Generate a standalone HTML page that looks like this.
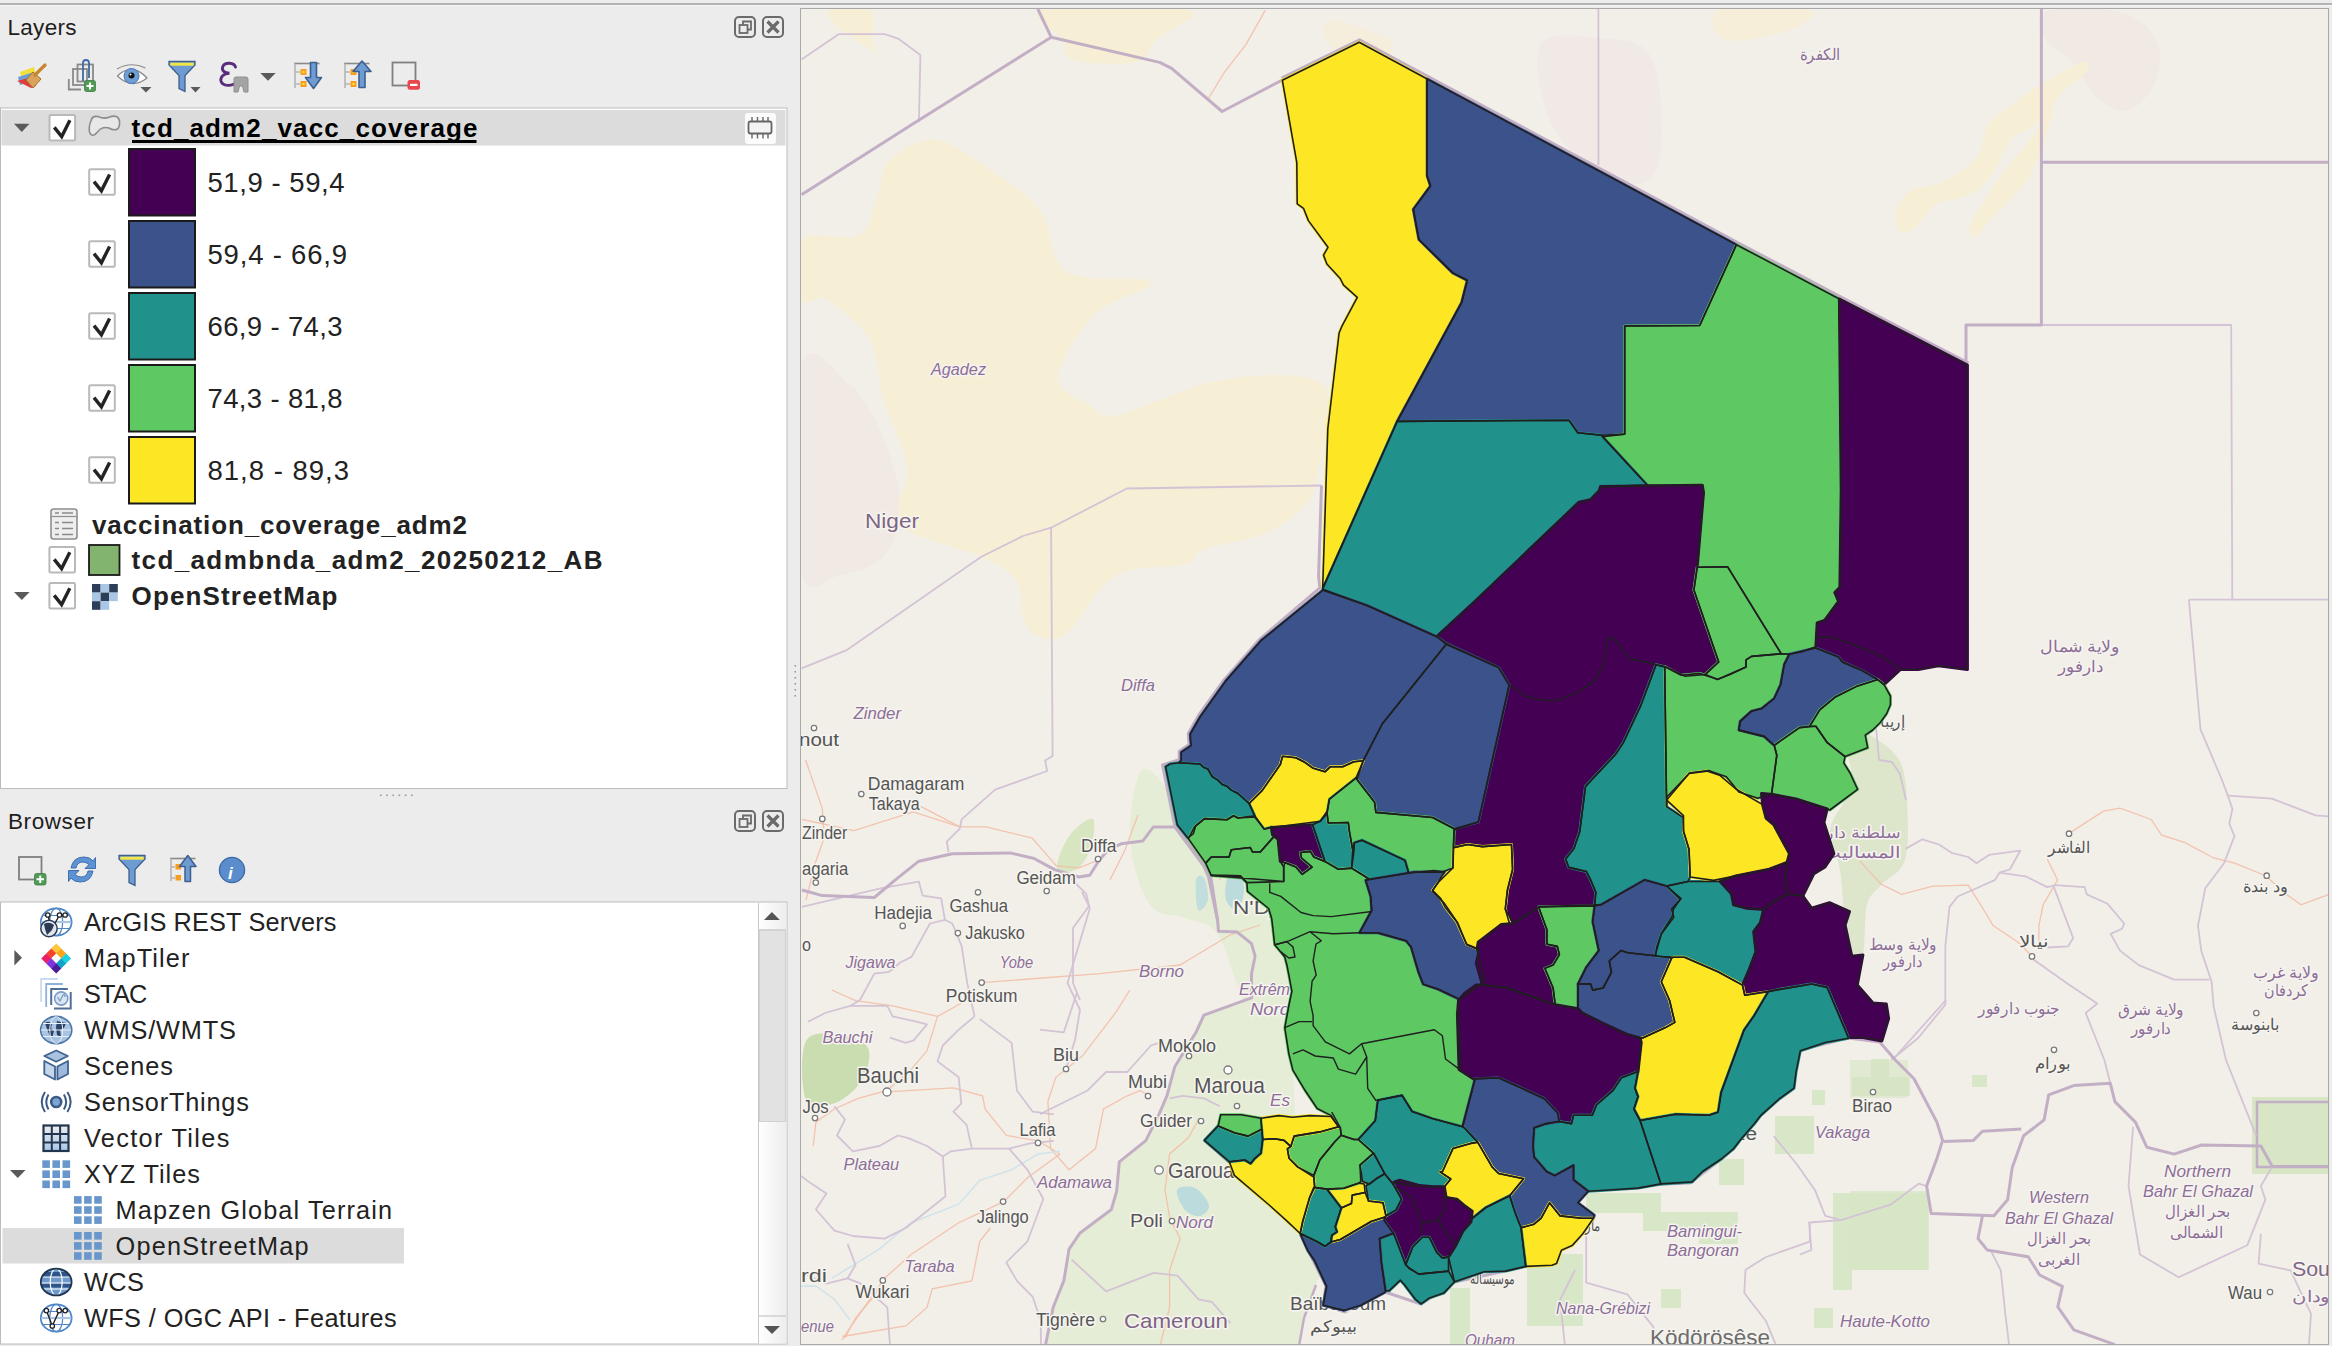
<!DOCTYPE html><html><head><meta charset="utf-8"><style>html,body{margin:0;padding:0;background:#ececec;overflow:hidden}svg{display:block}text{font-family:"Liberation Sans",sans-serif}</style></head><body>
<svg width="2332" height="1346" viewBox="0 0 2332 1346">
<rect x="0" y="0" width="2332" height="1346" fill="#ececec"/>
<rect x="0" y="3" width="2332" height="2" fill="#b2b2b2"/>
<rect x="0" y="5" width="2332" height="1" fill="#f6f6f6"/>
<clipPath id="mc"><rect x="801" y="9" width="1527" height="1335"/></clipPath>
<rect x="800.5" y="8.5" width="1528" height="1336" fill="#f2efe9" stroke="#a9a9a9" stroke-width="1"/>
<g clip-path="url(#mc)">
<path d="M801.0,365.0 C809.2,334.2 836.8,374.2 850.0,385.0 C863.2,395.8 871.7,410.8 880.0,430.0 C888.3,449.2 899.2,479.2 900.0,500.0 C900.8,520.8 895.0,542.5 885.0,555.0 C875.0,567.5 854.0,572.5 840.0,575.0 C826.0,577.5 807.5,605.0 801.0,570.0 C794.5,535.0 792.8,395.8 801.0,365.0Z" fill="#efe7e2" opacity="0.65"/>
<path d="M2045.0,12.0 C2057.3,7.3 2101.5,7.3 2120.0,12.0 C2138.5,16.7 2150.0,28.7 2156.0,40.0 C2162.0,51.3 2160.3,68.3 2156.0,80.0 C2151.7,91.7 2139.3,106.7 2130.0,110.0 C2120.7,113.3 2110.0,108.3 2100.0,100.0 C2090.0,91.7 2079.0,70.0 2070.0,60.0 C2061.0,50.0 2050.2,48.0 2046.0,40.0 C2041.8,32.0 2032.7,16.7 2045.0,12.0Z" fill="#efe7e2" opacity="0.8"/>
<path d="M1540.0,45.0 C1548.0,30.5 1581.7,36.3 1600.0,38.0 C1618.3,39.7 1639.7,38.0 1650.0,55.0 C1660.3,72.0 1662.8,118.8 1662.0,140.0 C1661.2,161.2 1655.3,176.7 1645.0,182.0 C1634.7,187.3 1615.5,181.5 1600.0,172.0 C1584.5,162.5 1562.0,146.2 1552.0,125.0 C1542.0,103.8 1532.0,59.5 1540.0,45.0Z" fill="#efe7e2" opacity="0.7"/>
<path d="M936.0,140.0 C952.7,141.7 972.7,158.3 990.0,170.0 C1007.3,181.7 1027.2,193.0 1040.0,210.0 C1052.8,227.0 1048.7,260.0 1067.0,272.0 C1085.3,284.0 1145.5,274.8 1150.0,282.0 C1154.5,289.2 1109.3,299.0 1094.0,315.0 C1078.7,331.0 1058.7,363.0 1058.0,378.0 C1057.3,393.0 1080.0,398.8 1090.0,405.0 C1100.0,411.2 1096.0,419.2 1118.0,415.0 C1140.0,410.8 1187.8,385.0 1222.0,380.0 C1256.2,375.0 1307.0,370.0 1323.0,385.0 C1339.0,400.0 1321.0,450.0 1318.0,470.0 C1315.0,490.0 1314.0,494.3 1305.0,505.0 C1296.0,515.7 1280.8,526.7 1264.0,534.0 C1247.2,541.3 1217.0,544.0 1204.0,549.0 C1191.0,554.0 1200.8,559.5 1186.0,564.0 C1171.2,568.5 1134.8,564.5 1115.0,576.0 C1095.2,587.5 1079.8,623.0 1067.0,633.0 C1054.2,643.0 1045.3,638.5 1038.0,636.0 C1030.7,633.5 1026.5,627.0 1023.0,618.0 C1019.5,609.0 1023.5,592.0 1017.0,582.0 C1010.5,572.0 1001.8,566.3 984.0,558.0 C966.2,549.7 924.3,540.3 910.0,532.0 C895.7,523.7 898.5,519.0 898.0,508.0 C897.5,497.0 909.5,484.3 907.0,466.0 C904.5,447.7 889.2,419.0 883.0,398.0 C876.8,377.0 879.3,356.3 870.0,340.0 C860.7,323.7 838.5,306.7 827.0,300.0 C815.5,293.3 805.3,310.0 801.0,300.0 C796.7,290.0 791.2,250.8 801.0,240.0 C810.8,229.2 847.2,242.8 860.0,235.0 C872.8,227.2 873.0,205.5 878.0,193.0 C883.0,180.5 880.3,168.8 890.0,160.0 C899.7,151.2 919.3,138.3 936.0,140.0Z" fill="#f6eed5"/>
<path d="M1044.0,10.0 C1065.2,5.2 1170.2,5.2 1189.0,10.0 C1207.8,14.8 1165.8,30.3 1157.0,39.0 C1148.2,47.7 1150.0,58.5 1136.0,62.0 C1122.0,65.5 1085.3,63.8 1073.0,60.0 C1060.7,56.2 1066.8,47.3 1062.0,39.0 C1057.2,30.7 1022.8,14.8 1044.0,10.0Z" fill="#f6eed5"/>
<path d="M830.0,10.0 C835.2,7.0 862.8,4.2 870.0,10.0 C877.2,15.8 871.3,37.5 873.0,45.0 C874.7,52.5 885.7,57.8 880.0,55.0 C874.3,52.2 847.3,35.5 839.0,28.0 C830.7,20.5 824.8,13.0 830.0,10.0Z" fill="#f6eed5"/>
<path d="M2083.0,62.0 C2090.7,59.8 2089.5,67.0 2086.0,72.0 C2082.5,77.0 2068.3,84.8 2062.0,92.0 C2055.7,99.2 2053.3,109.0 2048.0,115.0 C2042.7,121.0 2036.3,123.8 2030.0,128.0 C2023.7,132.2 2015.8,133.0 2010.0,140.0 C2004.2,147.0 2000.3,161.7 1995.0,170.0 C1989.7,178.3 1983.8,185.3 1978.0,190.0 C1972.2,194.7 1967.2,195.5 1960.0,198.0 C1952.8,200.5 1942.5,200.0 1935.0,205.0 C1927.5,210.0 1920.8,223.5 1915.0,228.0 C1909.2,232.5 1903.2,235.0 1900.0,232.0 C1896.8,229.0 1894.0,217.0 1896.0,210.0 C1898.0,203.0 1904.7,194.5 1912.0,190.0 C1919.3,185.5 1929.5,188.0 1940.0,183.0 C1950.5,178.0 1967.0,169.7 1975.0,160.0 C1983.0,150.3 1982.2,134.0 1988.0,125.0 C1993.8,116.0 2001.3,112.7 2010.0,106.0 C2018.7,99.3 2027.8,92.3 2040.0,85.0 C2052.2,77.7 2075.3,64.2 2083.0,62.0Z" fill="#f6eed5"/>
<path d="M2052.0,108.0 C2054.5,108.0 2048.7,128.8 2045.0,140.0 C2041.3,151.2 2035.8,165.0 2030.0,175.0 C2024.2,185.0 2016.7,192.5 2010.0,200.0 C2003.3,207.5 1995.8,213.8 1990.0,220.0 C1984.2,226.2 1978.3,236.2 1975.0,237.0 C1971.7,237.8 1968.3,231.2 1970.0,225.0 C1971.7,218.8 1979.2,209.2 1985.0,200.0 C1990.8,190.8 1997.5,180.0 2005.0,170.0 C2012.5,160.0 2022.2,150.3 2030.0,140.0 C2037.8,129.7 2049.5,108.0 2052.0,108.0Z" fill="#f6eed5"/>
<path d="M1720.0,10.0 C1734.2,5.0 1798.3,6.7 1810.0,10.0 C1821.7,13.3 1804.2,25.0 1790.0,30.0 C1775.8,35.0 1736.7,43.3 1725.0,40.0 C1713.3,36.7 1705.8,15.0 1720.0,10.0Z" fill="#f6eed5" opacity="0.8"/>
<path d="M1330.0,20.0 C1340.0,19.2 1381.7,33.3 1390.0,40.0 C1398.3,46.7 1390.0,59.2 1380.0,60.0 C1370.0,60.8 1338.3,51.7 1330.0,45.0 C1321.7,38.3 1320.0,20.8 1330.0,20.0Z" fill="#f6eed5" opacity="0.7"/>
<path d="M1142.0,770.0 C1149.5,763.3 1163.7,785.0 1175.0,800.0 C1186.3,815.0 1198.2,847.5 1210.0,860.0 C1221.8,872.5 1233.5,861.7 1246.0,875.0 C1258.5,888.3 1276.8,917.5 1285.0,940.0 C1293.2,962.5 1300.8,998.3 1295.0,1010.0 C1289.2,1021.7 1262.8,1022.5 1250.0,1010.0 C1237.2,997.5 1228.8,950.3 1218.0,935.0 C1207.2,919.7 1196.3,923.0 1185.0,918.0 C1173.7,913.0 1159.2,918.0 1150.0,905.0 C1140.8,892.0 1131.3,862.5 1130.0,840.0 C1128.7,817.5 1134.5,776.7 1142.0,770.0Z" fill="#e6edd6"/>
<path d="M1057.0,867.0 C1056.2,861.2 1064.0,843.0 1070.0,835.0 C1076.0,827.0 1089.7,816.5 1093.0,819.0 C1096.3,821.5 1093.0,841.5 1090.0,850.0 C1087.0,858.5 1080.5,867.2 1075.0,870.0 C1069.5,872.8 1057.8,872.8 1057.0,867.0Z" fill="#d7e6c0"/>
<path d="M1251.5,997.9 L1203.9,1015.1 L1196.0,1032.3 L1174.8,1066.7 L1166.9,1095.8 L1159.0,1114.3 L1145.8,1140.7 L1119.3,1161.9 L1116.7,1191.0 L1111.4,1209.5 L1079.7,1233.3 L1069.1,1249.1 L1063.8,1280.9 L1053.2,1307.3 L1045.3,1346.0 L1299.0,1346.0 L1304.0,1318.0 L1316.0,1285.0 L1330.0,1250.0 L1300.0,1230.0 L1290.0,1000.0 L1290.0,955.0Z" fill="#e6edd6"/>
<path d="M1316.0,1285.0 L1304.0,1318.0 L1299.0,1346.0" fill="none" stroke="#c3afc5" stroke-width="2.5"/>
<path d="M1842.0,727.0 C1845.0,720.3 1860.5,729.5 1870.0,735.0 C1879.5,740.5 1892.8,749.2 1899.0,760.0 C1905.2,770.8 1906.0,783.3 1907.0,800.0 C1908.0,816.7 1909.3,845.8 1905.0,860.0 C1900.7,874.2 1887.3,877.5 1881.0,885.0 C1874.7,892.5 1870.0,893.5 1867.0,905.0 C1864.0,916.5 1865.7,945.5 1863.0,954.0 C1860.3,962.5 1854.0,960.8 1851.0,956.0 C1848.0,951.2 1846.8,939.3 1845.0,925.0 C1843.2,910.7 1842.5,885.8 1840.0,870.0 C1837.5,854.2 1829.2,841.7 1830.0,830.0 C1830.8,818.3 1841.3,809.2 1845.0,800.0 C1848.7,790.8 1852.5,787.2 1852.0,775.0 C1851.5,762.8 1839.0,733.7 1842.0,727.0Z" fill="#dde6cb"/>
<path d="M806.0,1041.0 C811.7,1030.2 829.7,1033.8 840.0,1035.0 C850.3,1036.2 864.3,1040.5 868.0,1048.0 C871.7,1055.5 867.5,1070.8 862.0,1080.0 C856.5,1089.2 844.3,1099.7 835.0,1103.0 C825.7,1106.3 810.8,1110.3 806.0,1100.0 C801.2,1089.7 800.3,1051.8 806.0,1041.0Z" fill="#c9ddb0"/>
<rect x="1586" y="1193" width="75" height="20" fill="#d5e5c3" opacity="0.85"/>
<rect x="1643" y="1212" width="95" height="19" fill="#d5e5c3" opacity="0.85"/>
<rect x="1699" y="1231" width="39" height="13" fill="#d5e5c3" opacity="0.85"/>
<rect x="1719" y="1159" width="25" height="26" fill="#d5e5c3" opacity="0.85"/>
<rect x="1852" y="1077" width="58" height="19" fill="#d5e5c3" opacity="0.85"/>
<rect x="1871" y="1059" width="18" height="18" fill="#d5e5c3" opacity="0.85"/>
<rect x="1812" y="1090" width="13" height="15" fill="#d5e5c3" opacity="0.85"/>
<rect x="1775" y="1116" width="39" height="38" fill="#d5e5c3" opacity="0.85"/>
<rect x="1972" y="1075" width="15" height="12" fill="#d5e5c3" opacity="0.85"/>
<rect x="1833" y="1193" width="95" height="77" fill="#d5e5c3" opacity="0.85"/>
<rect x="1833" y="1270" width="19" height="20" fill="#d5e5c3" opacity="0.85"/>
<rect x="1661" y="1289" width="20" height="19" fill="#d5e5c3" opacity="0.85"/>
<rect x="1814" y="1308" width="19" height="20" fill="#d5e5c3" opacity="0.85"/>
<rect x="1450" y="1288" width="20" height="56" fill="#d5e5c3" opacity="0.85"/>
<rect x="1527" y="1254" width="56" height="72" fill="#d5e5c3" opacity="0.85"/>
<rect x="2252" y="1097" width="80" height="77" fill="#d8e6c6"/>
<rect x="2257" y="1102" width="75" height="65" fill="none" stroke="#c3afc5" stroke-width="2.5"/>
<rect x="1850" y="1191" width="79" height="79" fill="#d5e5c3" opacity="0.7"/>
<rect x="1850" y="1060" width="58" height="38" fill="#d5e5c3" opacity="0.6"/>
<path d="M1228.0,876.0 C1230.3,871.7 1237.3,871.7 1240.0,874.0 C1242.7,876.3 1244.3,884.0 1244.0,890.0 C1243.7,896.0 1241.0,908.3 1238.0,910.0 C1235.0,911.7 1227.7,905.7 1226.0,900.0 C1224.3,894.3 1225.7,880.3 1228.0,876.0Z" fill="#aad3df" opacity="0.7"/>
<path d="M1196.0,880.0 C1197.0,874.7 1202.0,874.7 1204.0,878.0 C1206.0,881.3 1209.0,894.7 1208.0,900.0 C1207.0,905.3 1200.0,913.3 1198.0,910.0 C1196.0,906.7 1195.0,885.3 1196.0,880.0Z" fill="#aad3df" opacity="0.6"/>
<path d="M1177.0,1190.0 C1178.7,1186.3 1189.7,1185.5 1195.0,1188.0 C1200.3,1190.5 1208.2,1200.3 1209.0,1205.0 C1209.8,1209.7 1204.0,1215.2 1200.0,1216.0 C1196.0,1216.8 1188.8,1214.3 1185.0,1210.0 C1181.2,1205.7 1175.3,1193.7 1177.0,1190.0Z" fill="#aad3df" opacity="0.7"/>
<path d="M801.9,819.4 L853.9,830.6 L913.3,812.0 L959.8,826.9 L985.8,826.9 L1032.2,838.0 L1056.4,865.9 L1078.7,867.8 L1099.0,860.0" fill="none" stroke="#f3bea6" stroke-width="1.3" opacity="0.9"/>
<path d="M805.6,760.0 L822.3,808.3 L824.2,838.0 L814.9,864.0 L806.0,900.0" fill="none" stroke="#f3bea6" stroke-width="1.3" opacity="0.9"/>
<path d="M920.7,806.4 L959.8,826.9" fill="none" stroke="#f3bea6" stroke-width="1.3" opacity="0.9"/>
<path d="M978.3,982.9 L1100.0,973.6 L1180.0,965.0 L1230.0,935.0 L1260.0,925.0" fill="none" stroke="#f3bea6" stroke-width="1.3" opacity="0.9"/>
<path d="M1255.0,810.0 L1235.0,840.0 L1220.0,880.0" fill="none" stroke="#f3bea6" stroke-width="1.3" opacity="0.9"/>
<path d="M1138.0,815.0 L1125.0,850.0 L1110.0,880.0" fill="none" stroke="#f3bea6" stroke-width="1.3" opacity="0.9"/>
<path d="M2068.0,834.1 L2103.4,811.2 L2120.0,808.1 L2151.2,819.5 L2161.6,835.1 L2184.5,842.4 L2213.7,858.0 L2234.5,863.2 L2265.7,875.7 L2286.5,894.4 L2301.0,904.8 L2329.0,894.4" fill="none" stroke="#f3bea6" stroke-width="1.3" opacity="0.9"/>
<path d="M1860.0,861.1 L1880.8,884.0 L1901.6,894.4 L1932.8,886.1 L1968.2,885.1 L1980.7,904.8 L1993.1,925.6 L2018.1,942.3 L2030.6,954.7" fill="none" stroke="#f3bea6" stroke-width="1.3" opacity="0.9"/>
<path d="M2047.2,859.0 L2057.6,879.9 L2043.1,904.8 L2038.9,925.6 L2038.9,950.6" fill="none" stroke="#f3bea6" stroke-width="1.3" opacity="0.9"/>
<path d="M961.3,1003.2 L937.5,1016.4 L927.0,1050.8 L911.1,1069.3 L887.3,1090.5 L858.2,1098.4 L834.4,1109.0 L815.9,1122.2 L813.2,1146.0" fill="none" stroke="#f3bea6" stroke-width="1.3" opacity="0.9"/>
<path d="M887.3,1091.8 L953.4,1087.9 L982.5,1095.8 L985.1,1109.0 L1006.3,1135.5 L1038.0,1140.8 L1060.0,1154.0" fill="none" stroke="#f3bea6" stroke-width="1.3" opacity="0.9"/>
<path d="M831.7,990.0 L855.5,1000.6 L892.6,1005.9 L937.5,1016.4" fill="none" stroke="#f3bea6" stroke-width="1.3" opacity="0.9"/>
<path d="M1060.0,1154.0 L1027.5,1177.8 L1003.7,1201.6 L958.7,1222.7 L911.1,1254.5 L884.6,1278.3 L847.6,1331.2 L842.0,1340.0" fill="none" stroke="#f3bea6" stroke-width="1.3" opacity="0.9"/>
<path d="M990.4,1228.0 L979.8,1241.3 L971.9,1280.9 L932.2,1288.9 L927.0,1307.4 L905.8,1325.9 L842.3,1336.5" fill="none" stroke="#f3bea6" stroke-width="1.3" opacity="0.9"/>
<path d="M884.6,1283.6 L871.4,1299.4 L855.5,1318.0 L845.0,1338.0" fill="none" stroke="#f3bea6" stroke-width="1.3" opacity="0.9"/>
<path d="M1129.9,990.0 L1116.7,1011.2 L1082.3,1056.1 L1055.9,1077.3 L1047.9,1101.1 L1050.6,1148.6 L1069.1,1169.8 L1095.5,1148.6 L1103.5,1109.0 L1127.3,1095.8 L1140.5,1090.5 L1148.4,1095.8" fill="none" stroke="#f3bea6" stroke-width="1.3" opacity="0.9"/>
<path d="M1198.6,1119.6 L1188.1,1138.1 L1169.6,1153.9 L1165.0,1190.0 L1169.6,1217.4 L1180.1,1238.5 L1169.6,1270.3 L1169.6,1307.3 L1160.0,1346.0" fill="none" stroke="#f3bea6" stroke-width="1.3" opacity="0.9"/>
<path d="M1265.2,10.4 L1245.9,44.6 L1225.0,71.3 L1208.7,98.0" fill="none" stroke="#f3bea6" stroke-width="1.3" opacity="0.9"/>
<path d="M831.7,1278.3 L879.3,1249.2 L911.1,1222.7 L958.7,1204.2 L979.8,1180.4 L1011.6,1169.8 L1038.0,1154.0 L1060.0,1151.3" fill="none" stroke="#cfe3ea" stroke-width="1.5"/>
<path d="M800.0,1286.2 L816.0,1286.0 L834.4,1299.4 L850.0,1320.0" fill="none" stroke="#cfe3ea" stroke-width="1.5"/>
<path d="M801.5,59.5 L838.6,34.2 L884.7,34.2 L898.1,38.6 L920.4,55.0 L918.9,121.9" fill="none" stroke="#d3c3d5" stroke-width="1.8" stroke-linejoin="round"/>
<path d="M801.5,668.3 L846.1,650.4 L981.3,556.8 L1022.9,536.0 L1051.1,527.7 L1126.9,488.5 L1321.5,485.5" fill="none" stroke="#d3c3d5" stroke-width="1.8" stroke-linejoin="round"/>
<path d="M1051.1,527.7 L1052.6,755.9 L1045.2,760.4 L1047.1,771.0 L995.1,789.7 L961.6,819.4 L959.8,828.7 L946.8,841.7 L948.6,852.0" fill="none" stroke="#d3c3d5" stroke-width="1.8" stroke-linejoin="round"/>
<path d="M1598.4,9.0 L1598.4,165.0" fill="none" stroke="#d3c3d5" stroke-width="1.8" stroke-linejoin="round"/>
<path d="M1966.0,325.0 L2231.2,325.0 L2232.3,600.6" fill="none" stroke="#d3c3d5" stroke-width="1.8" stroke-linejoin="round"/>
<path d="M2188.9,599.7 L2329.0,599.7" fill="none" stroke="#d3c3d5" stroke-width="1.8" stroke-linejoin="round"/>
<path d="M1893.3,1059.0 L1946.0,1000.0" fill="none" stroke="#d3c3d5" stroke-width="1.8" stroke-linejoin="round"/>
<path d="M1809.8,1223.6 L1809.8,1241.6 L1766.1,1257.0 L1745.5,1269.8 L1744.3,1293.0 L1766.1,1321.3 L1776.4,1346.0" fill="none" stroke="#d3c3d5" stroke-width="1.8" stroke-linejoin="round"/>
<path d="M1586.2,1231.3 L1586.2,1282.7 L1627.3,1294.3 L1653.0,1326.4 L1660.0,1346.0" fill="none" stroke="#d3c3d5" stroke-width="1.8" stroke-linejoin="round"/>
<path d="M1565.0,1346.0 L1560.0,1300.0 L1575.0,1270.0" fill="none" stroke="#d3c3d5" stroke-width="1.8" stroke-linejoin="round"/>
<path d="M801.9,906.8 L881.7,888.2 L918.9,881.7 L922.6,895.6 L941.2,898.4 L944.9,919.8 L952.3,923.5 L961.6,945.8 L967.2,982.9 L974.6,1016.4" fill="none" stroke="#d3c3d5" stroke-width="1.8" stroke-linejoin="round"/>
<path d="M944.9,919.8 L930.0,923.5 L911.5,956.9 L900.3,962.5 L889.2,971.8 L874.3,973.6 L860.0,1000.0 L850.3,1005.9" fill="none" stroke="#d3c3d5" stroke-width="1.8" stroke-linejoin="round"/>
<path d="M1069.4,877.0 L1086.1,893.8 L1089.8,908.6 L1073.1,964.3 L1067.5,982.9 L1080.0,1010.0 L1075.0,1040.0 L1066.0,1069.0" fill="none" stroke="#d3c3d5" stroke-width="1.8" stroke-linejoin="round"/>
<path d="M2133.1,1126.7 L2128.5,1186.0 L2140.0,1254.5 L2178.7,1277.3 L2247.2,1245.3 L2265.4,1199.7 L2260.9,1186.0 L2272.3,1166.6" fill="none" stroke="#d3c3d5" stroke-width="1.8" stroke-linejoin="round"/>
<path d="M2260.9,1233.9 L2258.6,1263.6 L2290.5,1270.4 L2311.0,1313.8 L2309.0,1344.0" fill="none" stroke="#d3c3d5" stroke-width="1.8" stroke-linejoin="round"/>
<path d="M1773.8,1136.2 L1797.0,1164.5 L1815.0,1190.2 L1825.2,1215.9 L1841.0,1220.2 L1891.3,1204.3 L1918.6,1183.7 L1926.6,1186.0" fill="none" stroke="#d3c3d5" stroke-width="1.8" stroke-linejoin="round"/>
<path d="M1800.0,1254.5 L1811.4,1249.9 L1809.1,1222.5 L1841.0,1220.2" fill="none" stroke="#d3c3d5" stroke-width="1.8" stroke-linejoin="round"/>
<path d="M1991.6,1252.2 L2000.8,1270.4 L2005.3,1313.8 L2009.0,1344.0" fill="none" stroke="#d3c3d5" stroke-width="1.8" stroke-linejoin="round"/>
<path d="M1905.8,848.6 L1922.4,839.3 L1939.0,844.5 L1951.5,852.8 L1968.2,857.0 L1976.5,863.2 L1989.0,854.9 L2020.2,850.7 L2009.8,869.5 L1999.4,872.6 L1995.2,879.9 L1976.5,888.2 L1957.8,896.5 L1949.5,906.9 L1945.3,946.4 L1945.3,1004.7 L1918.2,1038.0 L1891.2,1060.0" fill="none" stroke="#d3c3d5" stroke-width="1.8" stroke-linejoin="round"/>
<path d="M1999.4,872.6 L2026.4,876.7 L2047.2,887.1 L2055.5,885.1 L2084.7,887.1 L2086.7,894.4 L2107.6,903.8 L2124.2,923.5 L2122.1,928.7 L2110.7,933.9 L2120.0,950.6 L2138.8,965.1 L2174.1,979.7 L2209.5,979.7" fill="none" stroke="#d3c3d5" stroke-width="1.8" stroke-linejoin="round"/>
<path d="M2053.5,886.1 L2073.2,938.1 L2068.0,946.4 L2047.2,947.5" fill="none" stroke="#d3c3d5" stroke-width="1.8" stroke-linejoin="round"/>
<path d="M2032.7,958.9 L2068.0,983.9 L2097.2,1003.6 L2085.7,1013.0 L2104.4,1060.0 L2110.3,1083.3" fill="none" stroke="#d3c3d5" stroke-width="1.8" stroke-linejoin="round"/>
<path d="M2188.9,599.7 L2200.5,729.4 L2222.0,780.0 L2228.2,796.6 L2232.4,809.1 L2229.3,823.7 L2234.5,836.2 L2224.0,863.2 L2205.3,888.2 L2198.0,925.6 L2201.2,950.6 L2211.6,981.8 L2213.7,1006.8 L2226.0,1060.0 L2256.3,1135.8" fill="none" stroke="#d3c3d5" stroke-width="1.8" stroke-linejoin="round"/>
<path d="M2228.2,795.6 L2271.9,798.7 L2315.6,815.4 L2329.0,816.4" fill="none" stroke="#d3c3d5" stroke-width="1.8" stroke-linejoin="round"/>
<path d="M807.9,1021.7 L826.4,1012.5 L850.3,1005.9 L887.3,1005.9 L892.6,1016.4 L916.4,1021.7 L927.0,1024.4 L913.7,1040.3 L905.8,1042.9 L889.9,1037.6" fill="none" stroke="#d3c3d5" stroke-width="1.8" stroke-linejoin="round"/>
<path d="M974.6,1016.4 L958.7,1029.7 L942.8,1045.5 L937.5,1061.4 L958.7,1077.3 L961.3,1103.7 L953.4,1111.7 L966.6,1124.9 L971.9,1148.7 L950.8,1151.3 L942.8,1156.6 L945.5,1196.3 L905.8,1228.0 L884.6,1238.6 L852.9,1236.0 L834.4,1230.7 L815.9,1209.5 L826.4,1193.6 L810.6,1183.1 L801.0,1176.0" fill="none" stroke="#d3c3d5" stroke-width="1.8" stroke-linejoin="round"/>
<path d="M834.4,1106.4 L845.0,1119.6 L837.0,1135.5 L852.9,1151.3 L879.3,1146.0 L897.9,1135.5 L908.4,1138.1 L927.0,1146.0 L942.8,1156.6" fill="none" stroke="#d3c3d5" stroke-width="1.8" stroke-linejoin="round"/>
<path d="M971.9,1148.7 L1009.0,1148.7 L1030.1,1143.4 L1053.9,1140.8" fill="none" stroke="#d3c3d5" stroke-width="1.8" stroke-linejoin="round"/>
<path d="M1009.0,1148.7 L1027.5,1169.8 L1043.3,1199.0 L1027.5,1241.3 L1006.3,1262.4 L1016.9,1280.9 L1032.7,1296.8 L1040.7,1320.6 L1041.0,1346.0" fill="none" stroke="#d3c3d5" stroke-width="1.8" stroke-linejoin="round"/>
<path d="M802.6,1273.0 L826.4,1283.6 L847.6,1278.3 L860.8,1283.6 L887.3,1307.4 L890.0,1346.0" fill="none" stroke="#d3c3d5" stroke-width="1.8" stroke-linejoin="round"/>
<path d="M847.6,1243.9 L855.5,1265.0 L847.6,1278.3" fill="none" stroke="#d3c3d5" stroke-width="1.8" stroke-linejoin="round"/>
<path d="M979.8,1019.1 L1011.6,1042.9 L1016.9,1090.5 L1032.7,1111.7 L1053.9,1114.3" fill="none" stroke="#d3c3d5" stroke-width="1.8" stroke-linejoin="round"/>
<path d="M1040.0,1029.7 L1063.8,1032.3 L1077.0,992.6" fill="none" stroke="#d3c3d5" stroke-width="1.8" stroke-linejoin="round"/>
<path d="M1040.0,1114.3 L1055.9,1106.3 L1087.6,1090.5 L1098.2,1079.9 L1106.1,1072.0 L1127.3,1072.0 L1151.0,1045.5 L1159.0,1042.9" fill="none" stroke="#d3c3d5" stroke-width="1.8" stroke-linejoin="round"/>
<path d="M1169.6,1098.4 L1182.8,1095.8 L1203.9,1098.4 L1219.8,1106.3" fill="none" stroke="#d3c3d5" stroke-width="1.8" stroke-linejoin="round"/>
<path d="M1071.7,1259.7 L1106.1,1291.4 L1153.7,1272.9 L1177.5,1275.6 L1198.6,1299.4 L1211.9,1302.0 L1230.4,1323.2" fill="none" stroke="#d3c3d5" stroke-width="1.8" stroke-linejoin="round"/>
<path d="M1876.0,727.0 L1879.0,760.0 L1892.0,762.0 L1900.0,774.0 L1906.0,800.0" fill="none" stroke="#d3c3d5" stroke-width="1.8" stroke-linejoin="round"/>
<path d="M1082.0,892.0 L1089.0,906.0 L1073.0,928.0 L1073.0,956.0 L1073.0,983.0 L1080.0,1000.0" fill="none" stroke="#d3c3d5" stroke-width="1.8" stroke-linejoin="round"/>
<path d="M801.5,194.7 L915.9,121.9 L1051.2,37.2 L1037.8,9.0" fill="none" stroke="#c3afc5" stroke-width="3" stroke-linejoin="round"/>
<path d="M1051.2,37.2 L1159.7,62.4 L1171.6,68.4 L1222.1,111.5 L1281.6,80.3" fill="none" stroke="#c3afc5" stroke-width="3" stroke-linejoin="round"/>
<path d="M1281.5,78.0 L1359.5,39.8 L1428.5,76.8 L1601.2,169.3 L1737.6,242.5 L1840.6,296.8 L1968.6,363.0" fill="none" stroke="#c3afc5" stroke-width="3" stroke-linejoin="round"/>
<path d="M2041.4,9.0 L2041.4,325.0 L1966.0,325.0 L1966.0,364.0" fill="none" stroke="#c3afc5" stroke-width="3" stroke-linejoin="round"/>
<path d="M2041.4,162.2 L2329.0,162.2" fill="none" stroke="#c3afc5" stroke-width="3" stroke-linejoin="round"/>
<path d="M801.9,890.0 L822.3,895.6 L874.3,897.5 L896.6,878.9 L918.9,861.2 L952.3,853.8 L1009.9,852.9 L1034.1,858.5 L1054.5,869.6 L1078.7,877.0 L1089.8,875.2 L1099.1,860.3 L1108.8,849.2 L1121.3,843.8 L1142.7,841.1 L1153.4,826.9 L1174.8,826.9" fill="none" stroke="#c3afc5" stroke-width="3" stroke-linejoin="round"/>
<path d="M1321.5,485.5 L1318.6,576.1 L1319.8,588.0 L1259.5,639.5 L1224.0,680.0 L1198.5,715.5 L1188.3,733.5 L1188.6,740.0 L1189.2,744.6 L1179.2,751.3 L1179.2,759.6 L1162.5,765.0 L1174.5,824.5 L1185.0,839.0 L1203.0,864.0 L1208.5,877.0 L1217.6,920.5" fill="none" stroke="#c3afc5" stroke-width="3" stroke-linejoin="round"/>
<path d="M1174.8,826.9 L1210.5,875.0 L1217.6,920.5 L1218.5,931.2 L1237.2,932.1 L1251.5,943.7 L1255.1,956.2 L1251.5,974.0 L1251.5,997.9 L1203.9,1015.1 L1196.0,1032.3 L1174.8,1066.7 L1166.9,1095.8 L1159.0,1114.3 L1145.8,1140.7 L1119.3,1161.9 L1116.7,1191.0 L1111.4,1209.5 L1079.7,1233.3 L1069.1,1249.1 L1063.8,1280.9 L1053.2,1307.3 L1045.3,1346.0" fill="none" stroke="#c3afc5" stroke-width="3" stroke-linejoin="round"/>
<path d="M1879.9,1042.3 L1895.8,1060.5 L1914.0,1078.8 L1936.9,1122.1 L1942.6,1140.4 L1936.9,1158.6 L1926.6,1186.0 L1931.2,1213.4 L1993.9,1215.7 L2007.6,1199.7 L2012.2,1167.8 L2023.6,1135.8 L2044.1,1119.9 L2048.7,1094.8 L2073.8,1085.6 L2110.3,1083.3 L2114.9,1101.6 L2135.4,1122.1 L2146.8,1147.2 L2174.2,1154.1 L2201.6,1145.0 L2260.9,1146.1 L2272.3,1166.6 L2329.0,1166.6" fill="none" stroke="#c3afc5" stroke-width="3" stroke-linejoin="round"/>
<path d="M1943.7,1141.5 L1973.4,1140.4 L1982.5,1131.3 L2021.3,1129.0" fill="none" stroke="#c3afc5" stroke-width="3" stroke-linejoin="round"/>
<path d="M1982.5,1215.7 L1978.0,1238.5 L1987.1,1249.9 L2028.2,1256.7 L2039.6,1275.0 L2062.4,1286.4 L2057.8,1306.9 L2073.8,1329.8 L2114.9,1344.6" fill="none" stroke="#c3afc5" stroke-width="3" stroke-linejoin="round"/>
<path d="M1204.0,1140.0 L1229.0,1162.0 L1300.0,1233.0 L1308.0,1250.0 L1326.0,1286.0 L1323.0,1305.0 L1345.0,1312.0 L1385.0,1292.0 L1421.0,1304.0 L1455.0,1282.0 L1505.0,1271.0 L1526.0,1266.0 L1552.0,1265.0 L1584.0,1190.0 L1600.0,1185.0 L1640.0,1185.0 L1690.0,1183.0 L1720.0,1160.0 L1760.0,1116.0 L1800.0,1050.0 L1848.0,1038.0 L1880.0,1042.0" fill="none" stroke="#c3afc5" stroke-width="3" stroke-linejoin="round"/>
<text x="867.8" y="790.1" font-size="17.5" fill="#555555" textLength="96.6" lengthAdjust="spacingAndGlyphs" font-weight="normal" text-anchor="start" stroke="#f6f4ef" stroke-width="3" stroke-linejoin="round" paint-order="stroke">Damagaram</text>
<text x="868.7" y="809.8" font-size="17.5" fill="#555555" textLength="51" lengthAdjust="spacingAndGlyphs" font-weight="normal" text-anchor="start" stroke="#f6f4ef" stroke-width="3" stroke-linejoin="round" paint-order="stroke">Takaya</text>
<text x="801.9" y="839" font-size="17.5" fill="#555555" textLength="45.5" lengthAdjust="spacingAndGlyphs" font-weight="normal" text-anchor="start" stroke="#f6f4ef" stroke-width="3" stroke-linejoin="round" paint-order="stroke">Zinder</text>
<text x="801.9" y="875.2" font-size="17.5" fill="#555555" textLength="46.4" lengthAdjust="spacingAndGlyphs" font-weight="normal" text-anchor="start" stroke="#f6f4ef" stroke-width="3" stroke-linejoin="round" paint-order="stroke">agaria</text>
<text x="874.3" y="918.8" font-size="17.5" fill="#555555" textLength="57.6" lengthAdjust="spacingAndGlyphs" font-weight="normal" text-anchor="start" stroke="#f6f4ef" stroke-width="3" stroke-linejoin="round" paint-order="stroke">Hadejia</text>
<text x="949.5" y="912" font-size="17.5" fill="#555555" textLength="58.5" lengthAdjust="spacingAndGlyphs" font-weight="normal" text-anchor="start" stroke="#f6f4ef" stroke-width="3" stroke-linejoin="round" paint-order="stroke">Gashua</text>
<text x="965.3" y="939.3" font-size="17.5" fill="#555555" textLength="59.5" lengthAdjust="spacingAndGlyphs" font-weight="normal" text-anchor="start" stroke="#f6f4ef" stroke-width="3" stroke-linejoin="round" paint-order="stroke">Jakusko</text>
<text x="1016.4" y="883.5" font-size="17.5" fill="#555555" textLength="59.5" lengthAdjust="spacingAndGlyphs" font-weight="normal" text-anchor="start" stroke="#f6f4ef" stroke-width="3" stroke-linejoin="round" paint-order="stroke">Geidam</text>
<text x="945.8" y="1001.5" font-size="17.5" fill="#555555" textLength="71.6" lengthAdjust="spacingAndGlyphs" font-weight="normal" text-anchor="start" stroke="#f6f4ef" stroke-width="3" stroke-linejoin="round" paint-order="stroke">Potiskum</text>
<text x="799" y="745.5" font-size="17.5" fill="#555555" textLength="40" lengthAdjust="spacingAndGlyphs" font-weight="normal" text-anchor="start" stroke="#f6f4ef" stroke-width="3" stroke-linejoin="round" paint-order="stroke">nout</text>
<text x="1081" y="852" font-size="17.5" fill="#555555" textLength="35.5" lengthAdjust="spacingAndGlyphs" font-weight="normal" text-anchor="start" stroke="#f6f4ef" stroke-width="3" stroke-linejoin="round" paint-order="stroke">Diffa</text>
<text x="801.9" y="951.3" font-size="17.5" fill="#555555" textLength="9" lengthAdjust="spacingAndGlyphs" font-weight="normal" text-anchor="start" stroke="#f6f4ef" stroke-width="3" stroke-linejoin="round" paint-order="stroke">o</text>
<text x="1053" y="1061" font-size="17.5" fill="#555555" textLength="26" lengthAdjust="spacingAndGlyphs" font-weight="normal" text-anchor="start" stroke="#f6f4ef" stroke-width="3" stroke-linejoin="round" paint-order="stroke">Biu</text>
<text x="1158" y="1052" font-size="17.5" fill="#555555" textLength="58" lengthAdjust="spacingAndGlyphs" font-weight="normal" text-anchor="start" stroke="#f6f4ef" stroke-width="3" stroke-linejoin="round" paint-order="stroke">Mokolo</text>
<text x="1128" y="1088" font-size="17.5" fill="#555555" textLength="39" lengthAdjust="spacingAndGlyphs" font-weight="normal" text-anchor="start" stroke="#f6f4ef" stroke-width="3" stroke-linejoin="round" paint-order="stroke">Mubi</text>
<text x="1019.5" y="1135.5" font-size="17.5" fill="#555555" textLength="36" lengthAdjust="spacingAndGlyphs" font-weight="normal" text-anchor="start" stroke="#f6f4ef" stroke-width="3" stroke-linejoin="round" paint-order="stroke">Lafia</text>
<text x="1140" y="1127" font-size="17.5" fill="#555555" textLength="52" lengthAdjust="spacingAndGlyphs" font-weight="normal" text-anchor="start" stroke="#f6f4ef" stroke-width="3" stroke-linejoin="round" paint-order="stroke">Guider</text>
<text x="976.7" y="1222.7" font-size="17.5" fill="#555555" textLength="52" lengthAdjust="spacingAndGlyphs" font-weight="normal" text-anchor="start" stroke="#f6f4ef" stroke-width="3" stroke-linejoin="round" paint-order="stroke">Jalingo</text>
<text x="855.5" y="1298" font-size="17.5" fill="#555555" textLength="54" lengthAdjust="spacingAndGlyphs" font-weight="normal" text-anchor="start" stroke="#f6f4ef" stroke-width="3" stroke-linejoin="round" paint-order="stroke">Wukari</text>
<text x="801" y="1282" font-size="17.5" fill="#555555" textLength="26" lengthAdjust="spacingAndGlyphs" font-weight="normal" text-anchor="start" stroke="#f6f4ef" stroke-width="3" stroke-linejoin="round" paint-order="stroke">rdi</text>
<text x="1036" y="1326" font-size="17.5" fill="#555555" textLength="59" lengthAdjust="spacingAndGlyphs" font-weight="normal" text-anchor="start" stroke="#f6f4ef" stroke-width="3" stroke-linejoin="round" paint-order="stroke">Tignère</text>
<text x="1130" y="1227" font-size="17.5" fill="#555555" textLength="33" lengthAdjust="spacingAndGlyphs" font-weight="normal" text-anchor="start" stroke="#f6f4ef" stroke-width="3" stroke-linejoin="round" paint-order="stroke">Poli</text>
<text x="802.6" y="1113" font-size="17.5" fill="#555555" textLength="26" lengthAdjust="spacingAndGlyphs" font-weight="normal" text-anchor="start" stroke="#f6f4ef" stroke-width="3" stroke-linejoin="round" paint-order="stroke">Jos</text>
<text x="1852" y="1112" font-size="17.5" fill="#555555" textLength="40" lengthAdjust="spacingAndGlyphs" font-weight="normal" text-anchor="start" stroke="#f6f4ef" stroke-width="3" stroke-linejoin="round" paint-order="stroke">Birao</text>
<text x="2228" y="1299" font-size="17.5" fill="#555555" textLength="34" lengthAdjust="spacingAndGlyphs" font-weight="normal" text-anchor="start" stroke="#f6f4ef" stroke-width="3" stroke-linejoin="round" paint-order="stroke">Wau</text>
<text x="1735" y="1140" font-size="17.5" fill="#555555" textLength="22" lengthAdjust="spacingAndGlyphs" font-weight="normal" text-anchor="start" stroke="#f6f4ef" stroke-width="3" stroke-linejoin="round" paint-order="stroke">ze</text>
<text x="1233" y="914" font-size="17.5" fill="#555555" textLength="42" lengthAdjust="spacingAndGlyphs" font-weight="normal" text-anchor="start" stroke="#f6f4ef" stroke-width="3" stroke-linejoin="round" paint-order="stroke">N'Dj</text>
<text x="1290" y="1309.5" font-size="17.5" fill="#555555" textLength="96" lengthAdjust="spacingAndGlyphs" font-weight="normal" text-anchor="start" stroke="#f6f4ef" stroke-width="3" stroke-linejoin="round" paint-order="stroke">Baïbokoum</text>
<text x="857" y="1082.6" font-size="22" fill="#555555" textLength="62" lengthAdjust="spacingAndGlyphs" font-weight="normal" text-anchor="start" stroke="#f6f4ef" stroke-width="3" stroke-linejoin="round" paint-order="stroke">Bauchi</text>
<text x="1194" y="1093" font-size="22" fill="#555555" textLength="71" lengthAdjust="spacingAndGlyphs" font-weight="normal" text-anchor="start" stroke="#f6f4ef" stroke-width="3" stroke-linejoin="round" paint-order="stroke">Maroua</text>
<text x="1168" y="1178" font-size="22" fill="#555555" textLength="66" lengthAdjust="spacingAndGlyphs" font-weight="normal" text-anchor="start" stroke="#f6f4ef" stroke-width="3" stroke-linejoin="round" paint-order="stroke">Garoua</text>
<text x="1124" y="1328" font-size="21" fill="#7d6585" textLength="104" lengthAdjust="spacingAndGlyphs" font-weight="normal" text-anchor="start" stroke="#f6f4ef" stroke-width="3" stroke-linejoin="round" paint-order="stroke">Cameroun</text>
<text x="865" y="528" font-size="21" fill="#7d6585" textLength="54" lengthAdjust="spacingAndGlyphs" font-weight="normal" text-anchor="start" stroke="#f6f4ef" stroke-width="3" stroke-linejoin="round" paint-order="stroke">Niger</text>
<text x="1650" y="1345" font-size="22" fill="#6d6d6d" textLength="120" lengthAdjust="spacingAndGlyphs" font-weight="normal" text-anchor="start" stroke="#f6f4ef" stroke-width="3" stroke-linejoin="round" paint-order="stroke">Ködörösêse</text>
<text x="2292" y="1276" font-size="21" fill="#7d6585" textLength="38" lengthAdjust="spacingAndGlyphs" font-weight="normal" text-anchor="start" stroke="#f6f4ef" stroke-width="3" stroke-linejoin="round" paint-order="stroke">Sou</text>
<text x="931" y="375" font-size="17" fill="#8d6e99" font-style="italic" textLength="55" lengthAdjust="spacingAndGlyphs" font-weight="normal" text-anchor="start" stroke="#f6f4ef" stroke-width="3" stroke-linejoin="round" paint-order="stroke">Agadez</text>
<text x="853.5" y="718.8" font-size="17" fill="#8d6e99" font-style="italic" textLength="47.5" lengthAdjust="spacingAndGlyphs" font-weight="normal" text-anchor="start" stroke="#f6f4ef" stroke-width="3" stroke-linejoin="round" paint-order="stroke">Zinder</text>
<text x="1121" y="690.6" font-size="17" fill="#8d6e99" font-style="italic" textLength="34" lengthAdjust="spacingAndGlyphs" font-weight="normal" text-anchor="start" stroke="#f6f4ef" stroke-width="3" stroke-linejoin="round" paint-order="stroke">Diffa</text>
<text x="845.5" y="968" font-size="17" fill="#8d6e99" font-style="italic" textLength="50" lengthAdjust="spacingAndGlyphs" font-weight="normal" text-anchor="start" stroke="#f6f4ef" stroke-width="3" stroke-linejoin="round" paint-order="stroke">Jigawa</text>
<text x="999.7" y="968" font-size="17" fill="#8d6e99" font-style="italic" textLength="33.4" lengthAdjust="spacingAndGlyphs" font-weight="normal" text-anchor="start" stroke="#f6f4ef" stroke-width="3" stroke-linejoin="round" paint-order="stroke">Yobe</text>
<text x="1139" y="977" font-size="17" fill="#8d6e99" font-style="italic" textLength="45" lengthAdjust="spacingAndGlyphs" font-weight="normal" text-anchor="start" stroke="#f6f4ef" stroke-width="3" stroke-linejoin="round" paint-order="stroke">Borno</text>
<text x="1239" y="995" font-size="17" fill="#8d6e99" font-style="italic" textLength="51" lengthAdjust="spacingAndGlyphs" font-weight="normal" text-anchor="start" stroke="#f6f4ef" stroke-width="3" stroke-linejoin="round" paint-order="stroke">Extrêm</text>
<text x="1250" y="1015" font-size="17" fill="#8d6e99" font-style="italic" textLength="40" lengthAdjust="spacingAndGlyphs" font-weight="normal" text-anchor="start" stroke="#f6f4ef" stroke-width="3" stroke-linejoin="round" paint-order="stroke">Nord</text>
<text x="822.5" y="1043" font-size="17" fill="#8d6e99" font-style="italic" textLength="50" lengthAdjust="spacingAndGlyphs" font-weight="normal" text-anchor="start" stroke="#f6f4ef" stroke-width="3" stroke-linejoin="round" paint-order="stroke">Bauchi</text>
<text x="843.6" y="1170" font-size="17" fill="#8d6e99" font-style="italic" textLength="55.6" lengthAdjust="spacingAndGlyphs" font-weight="normal" text-anchor="start" stroke="#f6f4ef" stroke-width="3" stroke-linejoin="round" paint-order="stroke">Plateau</text>
<text x="1037" y="1188" font-size="17" fill="#8d6e99" font-style="italic" textLength="75" lengthAdjust="spacingAndGlyphs" font-weight="normal" text-anchor="start" stroke="#f6f4ef" stroke-width="3" stroke-linejoin="round" paint-order="stroke">Adamawa</text>
<text x="1176" y="1228" font-size="17" fill="#8d6e99" font-style="italic" textLength="37" lengthAdjust="spacingAndGlyphs" font-weight="normal" text-anchor="start" stroke="#f6f4ef" stroke-width="3" stroke-linejoin="round" paint-order="stroke">Nord</text>
<text x="904.5" y="1271.7" font-size="17" fill="#8d6e99" font-style="italic" textLength="50" lengthAdjust="spacingAndGlyphs" font-weight="normal" text-anchor="start" stroke="#f6f4ef" stroke-width="3" stroke-linejoin="round" paint-order="stroke">Taraba</text>
<text x="801" y="1332" font-size="17" fill="#8d6e99" font-style="italic" textLength="33" lengthAdjust="spacingAndGlyphs" font-weight="normal" text-anchor="start" stroke="#f6f4ef" stroke-width="3" stroke-linejoin="round" paint-order="stroke">enue</text>
<text x="1270" y="1106" font-size="17" fill="#8d6e99" font-style="italic" textLength="20" lengthAdjust="spacingAndGlyphs" font-weight="normal" text-anchor="start" stroke="#f6f4ef" stroke-width="3" stroke-linejoin="round" paint-order="stroke">Es</text>
<text x="1815" y="1138" font-size="17" fill="#8d6e99" font-style="italic" textLength="55" lengthAdjust="spacingAndGlyphs" font-weight="normal" text-anchor="start" stroke="#f6f4ef" stroke-width="3" stroke-linejoin="round" paint-order="stroke">Vakaga</text>
<text x="1667" y="1237" font-size="17" fill="#8d6e99" font-style="italic" textLength="75" lengthAdjust="spacingAndGlyphs" font-weight="normal" text-anchor="start" stroke="#f6f4ef" stroke-width="3" stroke-linejoin="round" paint-order="stroke">Bamingui-</text>
<text x="1667" y="1256" font-size="17" fill="#8d6e99" font-style="italic" textLength="72" lengthAdjust="spacingAndGlyphs" font-weight="normal" text-anchor="start" stroke="#f6f4ef" stroke-width="3" stroke-linejoin="round" paint-order="stroke">Bangoran</text>
<text x="2164" y="1177" font-size="17" fill="#8d6e99" font-style="italic" textLength="67" lengthAdjust="spacingAndGlyphs" font-weight="normal" text-anchor="start" stroke="#f6f4ef" stroke-width="3" stroke-linejoin="round" paint-order="stroke">Northern</text>
<text x="2143" y="1196.5" font-size="17" fill="#8d6e99" font-style="italic" textLength="110" lengthAdjust="spacingAndGlyphs" font-weight="normal" text-anchor="start" stroke="#f6f4ef" stroke-width="3" stroke-linejoin="round" paint-order="stroke">Bahr El Ghazal</text>
<text x="2029" y="1203" font-size="17" fill="#8d6e99" font-style="italic" textLength="60" lengthAdjust="spacingAndGlyphs" font-weight="normal" text-anchor="start" stroke="#f6f4ef" stroke-width="3" stroke-linejoin="round" paint-order="stroke">Western</text>
<text x="2005" y="1223.5" font-size="17" fill="#8d6e99" font-style="italic" textLength="108" lengthAdjust="spacingAndGlyphs" font-weight="normal" text-anchor="start" stroke="#f6f4ef" stroke-width="3" stroke-linejoin="round" paint-order="stroke">Bahr El Ghazal</text>
<text x="1556" y="1314" font-size="17" fill="#8d6e99" font-style="italic" textLength="94" lengthAdjust="spacingAndGlyphs" font-weight="normal" text-anchor="start" stroke="#f6f4ef" stroke-width="3" stroke-linejoin="round" paint-order="stroke">Nana-Grébizi</text>
<text x="1840" y="1327" font-size="17" fill="#8d6e99" font-style="italic" textLength="90" lengthAdjust="spacingAndGlyphs" font-weight="normal" text-anchor="start" stroke="#f6f4ef" stroke-width="3" stroke-linejoin="round" paint-order="stroke">Haute-Kotto</text>
<text x="1465" y="1346" font-size="17" fill="#8d6e99" font-style="italic" textLength="50" lengthAdjust="spacingAndGlyphs" font-weight="normal" text-anchor="start" stroke="#f6f4ef" stroke-width="3" stroke-linejoin="round" paint-order="stroke">Ouham</text>
<text x="1800" y="60" font-size="16" fill="#8d6e99" textLength="40" lengthAdjust="spacingAndGlyphs" font-weight="normal" text-anchor="start" stroke="#f6f4ef" stroke-width="3" stroke-linejoin="round" paint-order="stroke">الكفرة</text>
<text x="2040" y="652" font-size="16" fill="#8d6e99" textLength="80" lengthAdjust="spacingAndGlyphs" font-weight="normal" text-anchor="start" stroke="#f6f4ef" stroke-width="3" stroke-linejoin="round" paint-order="stroke">ولاية شمال</text>
<text x="2058" y="672" font-size="16" fill="#8d6e99" textLength="45" lengthAdjust="spacingAndGlyphs" font-weight="normal" text-anchor="start" stroke="#f6f4ef" stroke-width="3" stroke-linejoin="round" paint-order="stroke">دارفور</text>
<text x="1978" y="1014" font-size="16" fill="#8d6e99" textLength="82" lengthAdjust="spacingAndGlyphs" font-weight="normal" text-anchor="start" stroke="#f6f4ef" stroke-width="3" stroke-linejoin="round" paint-order="stroke">جنوب دارفور</text>
<text x="1825" y="838" font-size="16" fill="#8d6e99" textLength="75" lengthAdjust="spacingAndGlyphs" font-weight="normal" text-anchor="start" stroke="#f6f4ef" stroke-width="3" stroke-linejoin="round" paint-order="stroke">سلطنة دار</text>
<text x="1822" y="858" font-size="16" fill="#8d6e99" textLength="78" lengthAdjust="spacingAndGlyphs" font-weight="normal" text-anchor="start" stroke="#f6f4ef" stroke-width="3" stroke-linejoin="round" paint-order="stroke">المساليت</text>
<text x="1869" y="950" font-size="16" fill="#8d6e99" textLength="68" lengthAdjust="spacingAndGlyphs" font-weight="normal" text-anchor="start" stroke="#f6f4ef" stroke-width="3" stroke-linejoin="round" paint-order="stroke">ولاية وسط</text>
<text x="1883" y="967" font-size="16" fill="#8d6e99" textLength="39" lengthAdjust="spacingAndGlyphs" font-weight="normal" text-anchor="start" stroke="#f6f4ef" stroke-width="3" stroke-linejoin="round" paint-order="stroke">دارفور</text>
<text x="2118" y="1015" font-size="16" fill="#8d6e99" textLength="66" lengthAdjust="spacingAndGlyphs" font-weight="normal" text-anchor="start" stroke="#f6f4ef" stroke-width="3" stroke-linejoin="round" paint-order="stroke">ولاية شرق</text>
<text x="2131" y="1034" font-size="16" fill="#8d6e99" textLength="40" lengthAdjust="spacingAndGlyphs" font-weight="normal" text-anchor="start" stroke="#f6f4ef" stroke-width="3" stroke-linejoin="round" paint-order="stroke">دارفور</text>
<text x="2253" y="978" font-size="16" fill="#8d6e99" textLength="66" lengthAdjust="spacingAndGlyphs" font-weight="normal" text-anchor="start" stroke="#f6f4ef" stroke-width="3" stroke-linejoin="round" paint-order="stroke">ولاية غرب</text>
<text x="2264" y="996" font-size="16" fill="#8d6e99" textLength="44" lengthAdjust="spacingAndGlyphs" font-weight="normal" text-anchor="start" stroke="#f6f4ef" stroke-width="3" stroke-linejoin="round" paint-order="stroke">كردفان</text>
<text x="2165" y="1217" font-size="16" fill="#8d6e99" textLength="65" lengthAdjust="spacingAndGlyphs" font-weight="normal" text-anchor="start" stroke="#f6f4ef" stroke-width="3" stroke-linejoin="round" paint-order="stroke">بحر الغزال</text>
<text x="2170" y="1238" font-size="16" fill="#8d6e99" textLength="53" lengthAdjust="spacingAndGlyphs" font-weight="normal" text-anchor="start" stroke="#f6f4ef" stroke-width="3" stroke-linejoin="round" paint-order="stroke">الشمالى</text>
<text x="2027" y="1244" font-size="16" fill="#8d6e99" textLength="64" lengthAdjust="spacingAndGlyphs" font-weight="normal" text-anchor="start" stroke="#f6f4ef" stroke-width="3" stroke-linejoin="round" paint-order="stroke">بحر الغزال</text>
<text x="2038" y="1265" font-size="16" fill="#8d6e99" textLength="42" lengthAdjust="spacingAndGlyphs" font-weight="normal" text-anchor="start" stroke="#f6f4ef" stroke-width="3" stroke-linejoin="round" paint-order="stroke">الغربى</text>
<text x="2292" y="1302" font-size="16" fill="#8d6e99" textLength="38" lengthAdjust="spacingAndGlyphs" font-weight="normal" text-anchor="start" stroke="#f6f4ef" stroke-width="3" stroke-linejoin="round" paint-order="stroke">ودان</text>
<text x="2048" y="853" font-size="16" fill="#555555" textLength="42" lengthAdjust="spacingAndGlyphs" font-weight="normal" text-anchor="start" stroke="#f6f4ef" stroke-width="3" stroke-linejoin="round" paint-order="stroke">الفاشر</text>
<text x="2243" y="892" font-size="16" fill="#555555" textLength="45" lengthAdjust="spacingAndGlyphs" font-weight="normal" text-anchor="start" stroke="#f6f4ef" stroke-width="3" stroke-linejoin="round" paint-order="stroke">ود بندة</text>
<text x="2019" y="947" font-size="16" fill="#555555" textLength="29" lengthAdjust="spacingAndGlyphs" font-weight="normal" text-anchor="start" stroke="#f6f4ef" stroke-width="3" stroke-linejoin="round" paint-order="stroke">نيالا</text>
<text x="2231" y="1030" font-size="16" fill="#555555" textLength="48" lengthAdjust="spacingAndGlyphs" font-weight="normal" text-anchor="start" stroke="#f6f4ef" stroke-width="3" stroke-linejoin="round" paint-order="stroke">بابنوسة</text>
<text x="2035" y="1069" font-size="16" fill="#555555" textLength="35" lengthAdjust="spacingAndGlyphs" font-weight="normal" text-anchor="start" stroke="#f6f4ef" stroke-width="3" stroke-linejoin="round" paint-order="stroke">بورام</text>
<text x="1880" y="727" font-size="16" fill="#555555" textLength="25" lengthAdjust="spacingAndGlyphs" font-weight="normal" text-anchor="start" stroke="#f6f4ef" stroke-width="3" stroke-linejoin="round" paint-order="stroke">إريبا</text>
<text x="1310" y="1332" font-size="16" fill="#555555" textLength="47" lengthAdjust="spacingAndGlyphs" font-weight="normal" text-anchor="start" stroke="#f6f4ef" stroke-width="3" stroke-linejoin="round" paint-order="stroke">بيبوكم</text>
<text x="1470" y="1284" font-size="16" fill="#555555" textLength="45" lengthAdjust="spacingAndGlyphs" font-weight="normal" text-anchor="start" stroke="#f6f4ef" stroke-width="3" stroke-linejoin="round" paint-order="stroke">موسيساله</text>
<text x="1585" y="1231" font-size="16" fill="#555555" textLength="16" lengthAdjust="spacingAndGlyphs" font-weight="normal" text-anchor="start" stroke="#f6f4ef" stroke-width="3" stroke-linejoin="round" paint-order="stroke">مار</text>
<circle cx="861.3" cy="794" r="2.7" fill="#fff" stroke="#7a7a7a" stroke-width="1.3"/>
<circle cx="822.3" cy="818.9" r="2.7" fill="#fff" stroke="#7a7a7a" stroke-width="1.3"/>
<circle cx="815.8" cy="882.6" r="2.7" fill="#fff" stroke="#7a7a7a" stroke-width="1.3"/>
<circle cx="902.7" cy="925.9" r="2.7" fill="#fff" stroke="#7a7a7a" stroke-width="1.3"/>
<circle cx="978" cy="892.3" r="2.7" fill="#fff" stroke="#7a7a7a" stroke-width="1.3"/>
<circle cx="957.9" cy="933.1" r="2.7" fill="#fff" stroke="#7a7a7a" stroke-width="1.3"/>
<circle cx="1046.7" cy="891" r="2.7" fill="#fff" stroke="#7a7a7a" stroke-width="1.3"/>
<circle cx="981.7" cy="982.6" r="2.7" fill="#fff" stroke="#7a7a7a" stroke-width="1.3"/>
<circle cx="814" cy="728" r="2.7" fill="#fff" stroke="#7a7a7a" stroke-width="1.3"/>
<circle cx="1098" cy="859" r="2.7" fill="#fff" stroke="#7a7a7a" stroke-width="1.3"/>
<circle cx="1066" cy="1069" r="2.7" fill="#fff" stroke="#7a7a7a" stroke-width="1.3"/>
<circle cx="1189" cy="1056" r="2.7" fill="#fff" stroke="#7a7a7a" stroke-width="1.3"/>
<circle cx="1148" cy="1096" r="2.7" fill="#fff" stroke="#7a7a7a" stroke-width="1.3"/>
<circle cx="1038" cy="1142.9" r="2.7" fill="#fff" stroke="#7a7a7a" stroke-width="1.3"/>
<circle cx="1201" cy="1121" r="2.7" fill="#fff" stroke="#7a7a7a" stroke-width="1.3"/>
<circle cx="1003.1" cy="1201.6" r="2.7" fill="#fff" stroke="#7a7a7a" stroke-width="1.3"/>
<circle cx="882.8" cy="1280.4" r="2.7" fill="#fff" stroke="#7a7a7a" stroke-width="1.3"/>
<circle cx="1103" cy="1319" r="2.7" fill="#fff" stroke="#7a7a7a" stroke-width="1.3"/>
<circle cx="1172" cy="1221" r="2.7" fill="#fff" stroke="#7a7a7a" stroke-width="1.3"/>
<circle cx="815" cy="1118" r="2.7" fill="#fff" stroke="#7a7a7a" stroke-width="1.3"/>
<circle cx="887" cy="1092" r="2.7" fill="#fff" stroke="#7a7a7a" stroke-width="1.3"/>
<circle cx="1159" cy="1170" r="2.7" fill="#fff" stroke="#7a7a7a" stroke-width="1.3"/>
<circle cx="1873" cy="1092" r="2.7" fill="#fff" stroke="#7a7a7a" stroke-width="1.3"/>
<circle cx="2270" cy="1292" r="2.7" fill="#fff" stroke="#7a7a7a" stroke-width="1.3"/>
<circle cx="2069" cy="833.7" r="2.7" fill="#fff" stroke="#7a7a7a" stroke-width="1.3"/>
<circle cx="2266.7" cy="875.7" r="2.7" fill="#fff" stroke="#7a7a7a" stroke-width="1.3"/>
<circle cx="2032" cy="956.4" r="2.7" fill="#fff" stroke="#7a7a7a" stroke-width="1.3"/>
<circle cx="2256.3" cy="1013" r="2.7" fill="#fff" stroke="#7a7a7a" stroke-width="1.3"/>
<circle cx="2054" cy="1049.8" r="2.7" fill="#fff" stroke="#7a7a7a" stroke-width="1.3"/>
<circle cx="887" cy="1092" r="4" fill="#fff" stroke="#7a7a7a" stroke-width="1.3"/>
<circle cx="1159" cy="1170" r="4.2" fill="#fff" stroke="#7a7a7a" stroke-width="1.3"/>
<circle cx="1228" cy="1070" r="4" fill="#fff" stroke="#7a7a7a" stroke-width="1.3"/>
<circle cx="1237" cy="1106" r="2.7" fill="#fff" stroke="#7a7a7a" stroke-width="1.3"/>
<g stroke-width="3" stroke-linejoin="round">
<path d="M1282.3,80.2 L1359.2,42.3 L1427.2,79.0 L1427.2,176.0 L1430.5,186.0 L1413.3,209.4 L1418.9,239.5 L1452.8,272.9 L1467.3,280.3 L1461.6,302.7 L1397.2,421.4 L1322.7,588.0 L1327.8,429.0 L1339.1,333.0 L1341.7,326.7 L1357.3,297.3 L1343.6,285.2 L1340.2,278.5 L1326.9,264.0 L1323.5,255.1 L1328.0,247.3 L1308.4,220.6 L1303.5,208.3 L1297.2,203.8 L1296.8,162.6Z" fill="#fde725" stroke="#fde725"/>
<path d="M1427.2,79.0 L1600.0,171.5 L1736.4,244.7 L1699.7,325.5 L1624.7,326.0 L1624.7,434.1 L1601.8,435.3 L1577.8,432.8 L1569.0,420.2 L1397.2,421.4 L1461.6,302.7 L1467.3,280.3 L1452.8,272.9 L1418.9,239.5 L1413.3,209.4 L1430.5,186.0 L1427.2,176.0Z" fill="#3b528b" stroke="#3b528b"/>
<path d="M1736.4,244.7 L1839.4,299.0 L1841.2,490.0 L1839.9,587.4 L1834.8,592.5 L1838.6,601.3 L1824.7,620.3 L1817.2,622.8 L1815.9,646.8 L1802.0,651.8 L1789.4,654.3 L1781.3,653.8 L1727.5,566.7 L1697.2,567.2 L1703.5,492.7 L1702.3,485.2 L1647.2,485.0 L1602.5,436.6 L1624.7,434.1 L1624.7,326.0 L1699.7,325.5Z" fill="#5ec962" stroke="#5ec962"/>
<path d="M1839.4,299.0 L1967.4,365.2 L1967.4,669.5 L1938.4,665.7 L1918.2,669.5 L1900.5,669.5 L1884.0,684.6 L1877.8,679.6 L1862.6,670.8 L1842.4,661.9 L1838.6,656.9 L1815.9,648.0 L1815.9,646.8 L1817.2,622.8 L1824.7,620.3 L1838.6,601.3 L1834.8,592.5 L1839.9,587.4 L1841.2,490.0Z" fill="#440154" stroke="#440154"/>
<path d="M1397.2,421.4 L1569.0,420.2 L1577.8,432.8 L1601.8,435.3 L1602.5,436.6 L1647.2,485.0 L1600.5,486.6 L1599.2,490.9 L1590.4,499.7 L1579.0,502.2 L1476.4,600.0 L1436.8,636.7 L1367.1,605.4 L1322.7,589.3Z" fill="#21918c" stroke="#21918c"/>
<path d="M1600.5,486.6 L1702.3,485.2 L1703.5,492.7 L1697.2,567.2 L1693.9,590.0 L1718.7,661.9 L1705.3,674.4 L1685.0,676.3 L1667.6,667.6 L1656.0,664.7 L1640.5,706.2 L1623.2,742.9 L1615.4,754.5 L1585.5,786.4 L1579.7,831.8 L1573.9,848.6 L1565.6,859.0 L1568.7,867.4 L1586.4,871.5 L1590.6,879.9 L1595.8,892.3 L1594.7,904.8 L1538.6,906.9 L1513.6,923.5 L1505.3,909.0 L1507.4,890.3 L1512.6,869.5 L1511.5,844.5 L1482.4,846.6 L1467.8,844.5 L1453.3,847.6 L1454.1,829.9 L1478.3,822.1 L1509.2,685.0 L1498.6,667.6 L1446.4,644.4 L1436.8,636.7 L1476.4,600.0 L1579.0,502.2 L1590.4,499.7 L1599.2,490.9Z" fill="#440154" stroke="#440154"/>
<path d="M1322.9,590.2 L1367.1,605.4 L1436.8,636.7 L1446.6,643.7 L1382.2,724.0 L1363.3,760.7 L1353.9,761.7 L1342.7,766.7 L1330.5,766.7 L1324.9,771.8 L1312.6,767.9 L1304.8,762.3 L1295.9,757.8 L1282.6,756.2 L1280.3,764.5 L1262.5,790.1 L1249.1,803.5 L1238.0,793.5 L1231.3,790.1 L1226.9,786.2 L1222.4,784.6 L1217.9,780.1 L1212.4,776.8 L1207.9,769.0 L1203.5,767.3 L1200.1,764.0 L1178.9,762.8 L1181.2,760.6 L1181.2,752.3 L1191.2,745.6 L1190.6,740.0 L1190.3,734.1 L1200.4,716.5 L1225.7,681.1 L1261.0,640.7Z" fill="#3b528b" stroke="#3b528b"/>
<path d="M1446.6,643.7 L1498.6,667.6 L1509.2,685.0 L1478.3,822.1 L1454.2,828.8 L1432.7,817.5 L1375.9,812.4 L1374.6,802.3 L1357.0,779.6 L1363.3,760.7 L1382.2,724.0Z" fill="#3b528b" stroke="#3b528b"/>
<path d="M1282.6,756.2 L1295.9,757.8 L1304.8,762.3 L1312.6,767.9 L1324.9,771.8 L1330.5,766.7 L1342.7,766.7 L1353.9,761.7 L1363.3,760.7 L1356.1,777.9 L1329.4,799.1 L1327.1,811.3 L1320.4,821.3 L1271.4,827.5 L1264.2,829.1 L1254.7,815.8 L1249.1,803.5 L1262.5,790.1 L1280.3,764.5Z" fill="#fde725" stroke="#fde725"/>
<path d="M1165.6,766.7 L1170.0,764.0 L1178.9,762.8 L1200.1,764.0 L1203.5,767.3 L1207.9,769.0 L1212.4,776.8 L1217.9,780.1 L1222.4,784.6 L1226.9,786.2 L1231.3,790.1 L1238.0,793.5 L1249.1,803.5 L1254.7,815.8 L1238.0,818.0 L1233.5,815.8 L1226.9,819.7 L1204.6,818.6 L1195.7,825.8 L1193.4,833.6 L1187.9,838.0 L1177.3,824.7Z" fill="#21918c" stroke="#21918c"/>
<path d="M1188.4,838.6 L1194.5,826.9 L1204.6,818.6 L1226.9,819.7 L1233.5,815.8 L1238.0,818.0 L1254.7,816.9 L1264.2,829.1 L1271.4,826.9 L1273.6,836.9 L1260.3,852.0 L1252.5,852.0 L1250.3,847.5 L1231.3,849.7 L1229.1,857.0 L1211.3,857.0 L1205.7,863.1Z" fill="#5ec962" stroke="#5ec962"/>
<path d="M1205.7,863.1 L1211.3,857.0 L1229.1,857.0 L1231.3,849.7 L1250.3,847.5 L1252.5,852.0 L1260.3,852.0 L1273.6,836.9 L1278.1,839.2 L1280.3,861.4 L1283.7,867.0 L1283.7,881.5 L1246.9,882.6 L1240.2,875.9 L1211.3,875.4Z" fill="#5ec962" stroke="#5ec962"/>
<path d="M1271.4,827.5 L1312.6,824.7 L1324.9,861.4 L1313.8,857.0 L1310.4,851.4 L1300.4,852.5 L1301.5,858.1 L1312.1,867.0 L1302.1,874.3 L1295.9,867.0 L1284.8,862.6 L1280.3,861.4 L1278.1,839.2 L1272.5,834.7Z" fill="#440154" stroke="#440154"/>
<path d="M1312.6,824.7 L1320.4,821.3 L1327.1,813.5 L1328.2,823.0 L1348.3,822.5 L1349.4,831.4 L1352.8,850.3 L1351.6,868.1 L1338.3,869.2 L1324.9,861.4Z" fill="#21918c" stroke="#21918c"/>
<path d="M1329.4,799.1 L1356.1,777.9 L1357.0,779.6 L1374.6,802.3 L1375.9,812.4 L1432.7,817.5 L1454.2,828.8 L1452.9,868.0 L1442.8,871.8 L1434.0,870.5 L1408.7,873.0 L1405.0,860.4 L1362.0,840.2 L1354.4,842.7 L1352.8,850.3 L1349.4,831.4 L1348.3,822.5 L1328.2,823.0 L1327.1,813.5Z" fill="#5ec962" stroke="#5ec962"/>
<path d="M1354.4,842.7 L1362.0,840.2 L1405.0,860.4 L1408.7,873.0 L1369.6,879.3 L1351.6,868.1 L1353.9,851.4Z" fill="#21918c" stroke="#21918c"/>
<path d="M1211.3,875.4 L1240.2,875.9 L1246.9,882.6 L1247.5,891.3 L1268.7,908.5 L1271.7,918.6 L1272.7,926.7 L1274.7,944.8 L1280.8,951.9 L1284.8,957.0 L1286.9,965.0 L1288.9,975.2 L1291.9,991.3 L1288.9,1005.5 L1284.8,1027.7 L1288.9,1053.9 L1292.9,1070.1 L1305.0,1090.3 L1317.2,1108.5 L1331.3,1115.6 L1338.6,1126.7 L1340.3,1127.6 L1341.2,1135.3 L1354.0,1139.5 L1358.3,1139.5 L1375.3,1120.7 L1377.9,1100.2 L1402.0,1095.4 L1412.1,1111.5 L1432.3,1118.6 L1462.6,1126.7 L1474.7,1080.2 L1460.6,1070.1 L1458.5,1000.5 L1459.6,999.4 L1438.4,989.3 L1423.2,984.2 L1418.2,971.1 L1411.1,946.9 L1406.1,940.8 L1377.8,932.7 L1359.6,932.7 L1371.7,910.5 L1370.7,896.4 L1365.7,880.2 L1369.6,879.3 L1351.6,868.1 L1338.3,869.2 L1324.9,861.4 L1313.8,857.0 L1310.4,851.4 L1300.4,852.5 L1301.5,858.1 L1312.1,867.0 L1302.1,874.3 L1295.9,867.0 L1284.8,862.6 L1283.7,867.0 L1283.7,881.5Z" fill="#5ec962" stroke="#5ec962"/>
<path d="M1365.7,880.2 L1414.1,872.1 L1444.4,872.1 L1432.3,891.3 L1444.4,903.4 L1457.6,922.6 L1466.7,944.8 L1476.8,948.9 L1484.8,981.2 L1459.6,999.4 L1438.4,989.3 L1423.2,984.2 L1418.2,971.1 L1411.1,946.9 L1406.1,940.8 L1377.8,932.7 L1359.6,932.7 L1371.7,910.5 L1370.7,896.4Z" fill="#3b528b" stroke="#3b528b"/>
<path d="M1446.0,874.7 L1452.9,868.0 L1453.3,847.6 L1467.8,844.5 L1482.4,846.6 L1511.5,844.5 L1512.6,869.5 L1507.4,890.3 L1505.3,909.0 L1509.5,923.5 L1501.1,924.6 L1478.2,942.3 L1477.2,948.5 L1466.8,944.3 L1456.4,921.5 L1445.0,906.9 L1440.8,898.6 L1432.5,890.3 L1438.7,881.9Z" fill="#fde725" stroke="#fde725"/>
<path d="M1478.2,942.3 L1501.1,924.6 L1513.6,923.5 L1538.6,906.9 L1546.9,929.8 L1546.9,944.3 L1557.3,946.4 L1559.4,954.7 L1553.1,965.1 L1544.8,968.3 L1553.1,988.0 L1555.2,1004.7 L1528.2,995.3 L1507.4,988.0 L1482.4,984.9 L1476.2,963.1 L1479.3,950.6 L1477.2,948.5Z" fill="#440154" stroke="#440154"/>
<path d="M1538.6,906.9 L1594.7,905.9 L1592.7,921.5 L1598.9,950.6 L1586.4,967.2 L1578.1,983.9 L1578.1,1008.8 L1555.2,1004.7 L1553.1,988.0 L1544.8,968.3 L1553.1,965.1 L1559.4,954.7 L1557.3,946.4 L1546.9,944.3 L1546.9,929.8Z" fill="#5ec962" stroke="#5ec962"/>
<path d="M1656.0,664.7 L1664.7,666.6 L1666.6,806.7 L1683.0,817.3 L1683.5,831.3 L1689.0,849.2 L1690.2,877.0 L1687.9,881.5 L1666.5,886.1 L1644.7,879.9 L1601.0,904.8 L1594.7,904.8 L1595.8,892.3 L1590.6,879.9 L1586.4,871.5 L1568.7,867.4 L1565.6,859.0 L1573.9,848.6 L1579.7,831.8 L1585.5,786.4 L1615.4,754.5 L1623.2,742.9 L1640.5,706.2Z" fill="#21918c" stroke="#21918c"/>
<path d="M1601.0,904.8 L1644.7,879.9 L1666.5,886.1 L1681.1,898.6 L1671.7,909.0 L1673.8,917.3 L1661.3,933.9 L1655.1,955.8 L1628.0,952.7 L1620.8,950.6 L1609.3,961.0 L1611.4,972.4 L1603.1,988.0 L1592.7,990.1 L1590.6,983.9 L1578.1,983.9 L1586.4,967.2 L1598.9,950.6 L1592.7,921.5 L1594.7,905.9Z" fill="#3b528b" stroke="#3b528b"/>
<path d="M1578.1,983.9 L1590.6,983.9 L1592.7,990.1 L1603.1,988.0 L1611.4,972.4 L1609.3,961.0 L1620.8,950.6 L1628.0,952.7 L1655.1,955.8 L1671.7,957.9 L1661.3,981.8 L1669.6,1000.5 L1674.8,1022.4 L1665.5,1027.6 L1642.6,1038.0 L1628.0,1034.8 L1603.1,1023.4 L1582.3,1013.0 L1578.1,1008.8Z" fill="#3b528b" stroke="#3b528b"/>
<path d="M1666.7,886.0 L1687.9,881.5 L1720.2,881.5 L1731.4,893.7 L1733.6,904.9 L1747.0,908.2 L1763.7,909.4 L1760.4,922.7 L1753.7,931.6 L1755.9,951.7 L1749.2,969.5 L1742.5,985.1 L1718.0,971.8 L1684.6,957.3 L1673.4,957.3 L1655.6,956.2 L1656.7,947.2 L1661.2,933.9 L1672.3,916.0 L1673.4,909.4 L1680.1,899.3Z" fill="#21918c" stroke="#21918c"/>
<path d="M1664.7,666.6 L1681.1,675.3 L1699.5,673.4 L1717.8,679.2 L1730.0,674.4 L1746.0,667.0 L1746.0,659.9 L1751.5,656.4 L1781.3,653.8 L1789.4,654.3 L1784.3,664.4 L1780.6,684.6 L1774.2,698.5 L1761.6,708.6 L1751.5,711.2 L1740.2,721.3 L1738.9,730.1 L1764.1,736.4 L1774.2,745.3 L1776.8,755.3 L1771.7,793.2 L1757.8,798.3 L1738.9,792.0 L1726.3,776.8 L1708.6,770.5 L1689.6,773.0 L1666.9,797.0 L1666.6,806.7Z" fill="#5ec962" stroke="#5ec962"/>
<path d="M1697.2,567.2 L1727.5,566.7 L1781.3,653.8 L1751.5,656.4 L1746.0,659.9 L1746.0,667.0 L1717.4,679.6 L1705.3,674.4 L1718.7,661.9 L1693.9,590.0Z" fill="#5ec962" stroke="#5ec962"/>
<path d="M1789.4,654.3 L1815.9,648.0 L1838.6,656.9 L1842.4,661.9 L1862.6,670.8 L1877.8,679.6 L1857.6,685.9 L1834.8,697.3 L1819.7,709.9 L1809.6,726.3 L1799.5,727.6 L1774.2,745.3 L1764.1,736.4 L1738.9,730.1 L1740.2,721.3 L1751.5,711.2 L1761.6,708.6 L1774.2,698.5 L1780.6,684.6 L1784.3,664.4Z" fill="#3b528b" stroke="#3b528b"/>
<path d="M1877.8,679.6 L1884.0,684.6 L1890.4,696.0 L1890.4,704.8 L1886.6,713.7 L1880.3,722.5 L1872.7,730.0 L1865.2,735.2 L1867.7,747.8 L1845.0,756.6 L1827.3,742.7 L1815.9,726.3 L1809.6,726.3 L1819.7,709.9 L1834.8,697.3 L1857.6,685.9Z" fill="#5ec962" stroke="#5ec962"/>
<path d="M1774.2,745.3 L1799.5,727.6 L1815.9,726.3 L1827.3,742.7 L1845.0,756.6 L1843.7,762.9 L1850.0,773.0 L1857.6,789.4 L1829.8,810.0 L1827.2,809.0 L1796.0,799.0 L1773.7,794.6 L1771.7,793.2 L1776.8,755.3Z" fill="#5ec962" stroke="#5ec962"/>
<path d="M1666.7,800.1 L1689.0,773.4 L1706.9,771.1 L1720.2,775.6 L1735.9,789.0 L1762.6,804.6 L1766.0,818.0 L1773.7,824.6 L1789.4,853.6 L1787.1,862.5 L1769.3,869.2 L1735.9,875.9 L1713.6,880.4 L1690.2,877.0 L1689.0,849.2 L1683.5,831.3 L1683.5,815.7Z" fill="#fde725" stroke="#fde725"/>
<path d="M1762.6,804.6 L1761.5,793.4 L1773.7,794.6 L1796.0,799.0 L1827.2,809.0 L1823.9,822.4 L1833.9,853.6 L1825.0,867.0 L1813.9,873.7 L1805.0,891.5 L1802.7,896.0 L1788.2,893.7 L1784.9,880.4 L1787.1,862.5 L1789.4,853.6 L1773.7,824.6 L1766.0,818.0Z" fill="#440154" stroke="#440154"/>
<path d="M1720.2,881.5 L1735.9,875.9 L1769.3,869.2 L1787.1,862.5 L1784.9,880.4 L1788.2,893.7 L1771.5,902.7 L1763.7,909.4 L1747.0,908.2 L1733.6,904.9 L1731.4,893.7Z" fill="#440154" stroke="#440154"/>
<path d="M1763.7,909.4 L1771.5,902.7 L1788.2,893.7 L1802.7,896.0 L1811.6,908.2 L1829.5,902.7 L1849.5,911.6 L1845.1,925.0 L1851.8,956.2 L1862.9,955.0 L1857.3,985.1 L1873.0,1003.0 L1886.3,1004.1 L1888.6,1018.6 L1881.9,1040.9 L1862.9,1037.5 L1848.4,1037.5 L1827.2,987.4 L1811.6,984.0 L1778.2,989.6 L1744.8,995.2 L1742.5,985.1 L1749.2,969.5 L1755.9,951.7 L1753.7,931.6 L1760.4,922.7Z" fill="#440154" stroke="#440154"/>
<path d="M1640.1,1038.3 L1642.6,1038.0 L1665.5,1027.6 L1674.8,1022.4 L1669.6,1000.5 L1661.3,981.8 L1671.7,957.9 L1673.4,957.3 L1684.6,957.3 L1718.0,971.8 L1742.5,985.1 L1744.8,995.2 L1768.2,991.8 L1753.7,1016.4 L1744.1,1030.0 L1721.2,1092.4 L1718.1,1112.2 L1708.8,1115.3 L1675.5,1114.3 L1640.1,1120.5 L1633.9,1109.0 L1638.0,1096.6 L1634.9,1088.2 L1638.0,1071.6 L1641.2,1042.5Z" fill="#fde725" stroke="#fde725"/>
<path d="M1744.1,1030.0 L1753.7,1016.4 L1768.2,991.8 L1778.2,989.6 L1811.6,984.0 L1827.2,987.4 L1848.4,1037.5 L1848.1,1038.3 L1825.3,1042.5 L1800.3,1050.8 L1796.1,1071.6 L1794.0,1088.2 L1779.5,1098.7 L1760.8,1115.3 L1754.5,1123.6 L1740.0,1140.3 L1733.7,1148.6 L1721.2,1159.0 L1702.5,1171.5 L1692.1,1181.9 L1660.9,1183.9 L1640.1,1120.5 L1675.5,1114.3 L1708.8,1115.3 L1718.1,1112.2 L1721.2,1092.4Z" fill="#21918c" stroke="#21918c"/>
<path d="M1458.5,1000.5 L1464.7,993.2 L1476.2,984.9 L1482.4,984.9 L1507.4,988.0 L1528.2,995.3 L1555.2,1004.7 L1578.1,1008.8 L1582.3,1013.0 L1603.1,1023.4 L1628.0,1034.8 L1640.1,1038.3 L1641.2,1042.5 L1638.0,1071.6 L1621.4,1077.8 L1613.1,1090.3 L1596.4,1104.9 L1592.3,1115.3 L1573.5,1115.3 L1571.5,1123.6 L1559.0,1121.5 L1557.9,1113.2 L1544.4,1098.7 L1517.4,1086.2 L1498.6,1077.8 L1473.7,1078.9 L1459.1,1069.5 L1457.4,1015.0Z" fill="#440154" stroke="#440154"/>
<path d="M1534.0,1127.8 L1546.5,1123.6 L1559.0,1121.5 L1571.5,1123.6 L1573.5,1115.3 L1592.3,1115.3 L1596.4,1104.9 L1613.1,1090.3 L1621.4,1077.8 L1638.0,1071.6 L1634.9,1088.2 L1638.0,1096.6 L1633.9,1109.0 L1640.1,1120.5 L1660.9,1183.9 L1638.0,1188.1 L1604.7,1190.2 L1588.1,1191.2 L1573.5,1179.8 L1573.5,1165.2 L1554.8,1175.6 L1546.5,1171.5 L1534.0,1156.9 L1533.0,1146.5Z" fill="#21918c" stroke="#21918c"/>
<path d="M1473.7,1078.9 L1498.6,1077.8 L1517.4,1086.2 L1544.4,1098.7 L1557.9,1113.2 L1559.0,1121.5 L1546.5,1123.6 L1534.0,1127.8 L1533.0,1146.5 L1534.0,1156.9 L1546.5,1171.5 L1554.8,1175.6 L1573.5,1165.2 L1573.5,1179.8 L1588.1,1191.2 L1577.7,1202.7 L1594.3,1215.1 L1593.5,1218.2 L1581.6,1218.2 L1560.2,1215.9 L1549.5,1202.8 L1541.2,1218.2 L1534.0,1224.2 L1521.0,1227.8 L1515.0,1212.3 L1509.7,1195.7 L1523.6,1178.7 L1498.6,1173.5 L1492.4,1167.3 L1477.8,1142.3 L1464.3,1127.8 L1462.6,1126.7 L1474.7,1080.2Z" fill="#3b528b" stroke="#3b528b"/>
<path d="M1462.6,1126.7 L1464.3,1127.8 L1477.8,1142.3 L1470.6,1143.4 L1452.9,1148.6 L1442.5,1171.5 L1440.1,1171.9 L1450.8,1179.0 L1444.3,1186.7 L1412.1,1185.7 L1391.6,1182.2 L1384.7,1173.7 L1373.6,1153.2 L1358.3,1139.5 L1375.3,1120.7 L1377.9,1100.2 L1402.0,1095.4 L1412.1,1111.5 L1432.3,1118.6Z" fill="#21918c" stroke="#21918c"/>
<path d="M1442.5,1171.5 L1452.9,1148.6 L1470.6,1143.4 L1477.8,1142.3 L1492.4,1167.3 L1498.6,1173.5 L1523.6,1178.7 L1509.7,1195.7 L1485.9,1207.5 L1471.0,1219.4 L1472.2,1211.1 L1463.9,1205.2 L1456.8,1199.2 L1446.1,1197.4 L1444.3,1186.7 L1450.8,1179.0 L1440.1,1171.9Z" fill="#fde725" stroke="#fde725"/>
<path d="M1521.0,1227.8 L1534.0,1224.2 L1541.2,1218.2 L1549.5,1202.8 L1560.2,1215.9 L1581.6,1218.2 L1593.5,1218.2 L1582.8,1233.7 L1572.1,1245.6 L1561.4,1250.3 L1556.6,1263.4 L1551.9,1265.2 L1525.7,1266.4Z" fill="#fde725" stroke="#fde725"/>
<path d="M1448.5,1256.9 L1455.6,1245.6 L1462.7,1231.3 L1471.0,1221.8 L1471.0,1219.4 L1485.9,1207.5 L1509.7,1195.7 L1515.0,1212.3 L1521.0,1227.8 L1525.7,1266.4 L1505.5,1271.1 L1484.1,1271.7 L1454.4,1281.8Z" fill="#21918c" stroke="#21918c"/>
<path d="M1392.6,1182.6 L1399.7,1180.2 L1409.2,1182.6 L1419.9,1185.6 L1433.0,1186.7 L1444.3,1186.7 L1446.1,1197.4 L1456.8,1199.2 L1463.9,1205.2 L1472.2,1211.1 L1471.0,1221.8 L1462.7,1231.3 L1455.6,1245.6 L1448.5,1256.9 L1442.5,1258.1 L1436.6,1252.1 L1429.4,1237.3 L1422.3,1237.3 L1412.8,1246.8 L1408.0,1258.7 L1405.7,1264.6 L1393.8,1233.7 L1384.3,1220.6 L1386.0,1215.9 L1396.2,1209.9 L1401.5,1199.2 L1394.4,1186.2Z" fill="#440154" stroke="#440154"/>
<path d="M1405.7,1264.6 L1412.8,1246.8 L1422.3,1237.3 L1429.4,1237.3 L1436.6,1252.1 L1442.5,1258.1 L1448.5,1256.9 L1448.5,1271.1 L1418.7,1274.1 L1409.2,1268.2Z" fill="#21918c" stroke="#21918c"/>
<path d="M1379.5,1238.5 L1392.0,1233.7 L1393.8,1233.7 L1405.7,1264.6 L1409.2,1268.2 L1418.7,1274.1 L1448.5,1271.1 L1454.4,1281.8 L1443.7,1293.1 L1429.4,1297.9 L1421.1,1303.8 L1415.2,1299.1 L1404.5,1284.8 L1400.3,1280.1 L1389.0,1290.8 L1385.5,1290.8 L1381.3,1262.2Z" fill="#21918c" stroke="#21918c"/>
<path d="M1360.0,1165.2 L1373.6,1153.2 L1384.7,1173.7 L1376.2,1178.8 L1369.4,1184.0 L1362.5,1181.4Z" fill="#21918c" stroke="#21918c"/>
<path d="M1365.9,1185.7 L1369.4,1184.0 L1376.2,1178.8 L1384.7,1173.7 L1391.6,1182.2 L1394.4,1186.2 L1401.5,1199.2 L1396.2,1209.9 L1386.0,1215.9 L1383.0,1202.7 L1368.5,1201.0Z" fill="#21918c" stroke="#21918c"/>
<path d="M1300.2,1233.5 L1316.4,1241.2 L1325.0,1246.3 L1330.9,1242.0 L1340.3,1239.5 L1350.6,1233.5 L1371.1,1221.5 L1384.3,1217.3 L1384.3,1220.6 L1393.8,1233.7 L1392.0,1233.7 L1379.5,1238.5 L1381.3,1262.2 L1385.5,1290.8 L1384.7,1292.4 L1360.8,1305.2 L1343.7,1310.4 L1323.2,1305.2 L1326.7,1286.4 L1314.7,1260.8 L1307.9,1250.6Z" fill="#3b528b" stroke="#3b528b"/>
<path d="M1341.2,1207.9 L1351.4,1203.6 L1352.3,1195.1 L1365.1,1192.5 L1368.5,1201.0 L1383.0,1202.7 L1386.0,1215.9 L1384.3,1217.3 L1371.1,1221.5 L1350.6,1233.5 L1340.3,1239.5 L1330.9,1242.0 L1331.8,1235.2 L1336.9,1231.8 L1335.2,1226.7Z" fill="#fde725" stroke="#fde725"/>
<path d="M1326.7,1189.1 L1343.7,1188.2 L1359.1,1183.1 L1364.2,1184.0 L1365.1,1192.5 L1352.3,1195.1 L1351.4,1203.6 L1341.2,1207.9Z" fill="#fde725" stroke="#fde725"/>
<path d="M1313.8,1187.4 L1326.7,1189.1 L1341.2,1207.9 L1335.2,1226.7 L1336.9,1231.8 L1331.8,1235.2 L1330.9,1242.0 L1325.0,1246.3 L1316.4,1241.2 L1300.2,1233.5 L1302.7,1221.5 L1309.6,1197.6Z" fill="#21918c" stroke="#21918c"/>
<path d="M1341.2,1135.3 L1354.0,1139.5 L1358.3,1139.5 L1373.6,1153.2 L1360.0,1165.2 L1360.8,1181.4 L1359.1,1183.1 L1343.7,1188.2 L1326.7,1189.1 L1314.7,1187.4 L1313.8,1175.4 L1319.8,1160.0 L1335.2,1141.2Z" fill="#5ec962" stroke="#5ec962"/>
<path d="M1294.2,1136.1 L1319.8,1131.9 L1338.6,1126.7 L1340.3,1127.6 L1341.2,1135.3 L1335.2,1141.2 L1319.8,1160.0 L1313.8,1175.4 L1297.6,1166.9 L1289.1,1158.3 L1287.4,1148.9 L1290.8,1146.4Z" fill="#5ec962" stroke="#5ec962"/>
<path d="M1229.3,1161.7 L1244.7,1160.0 L1250.6,1163.5 L1254.9,1158.3 L1260.9,1153.2 L1262.6,1139.5 L1274.6,1138.7 L1284.0,1140.4 L1290.8,1146.4 L1287.4,1148.9 L1289.1,1158.3 L1297.6,1166.9 L1313.8,1177.1 L1314.7,1187.4 L1309.6,1197.6 L1302.7,1221.5 L1300.2,1233.5 L1285.7,1219.8 L1268.6,1204.5 L1234.4,1175.4Z" fill="#fde725" stroke="#fde725"/>
<path d="M1260.9,1118.2 L1278.8,1115.6 L1292.5,1117.3 L1309.6,1115.6 L1330.9,1116.5 L1338.6,1126.7 L1319.8,1131.9 L1294.2,1136.1 L1290.8,1146.4 L1284.0,1140.4 L1274.6,1138.7 L1262.6,1139.5Z" fill="#fde725" stroke="#fde725"/>
<path d="M1204.5,1140.4 L1218.2,1125.9 L1234.4,1132.7 L1248.1,1136.1 L1261.7,1129.3 L1262.6,1139.5 L1260.9,1153.2 L1254.9,1158.3 L1250.6,1163.5 L1244.7,1160.0 L1229.3,1161.7Z" fill="#21918c" stroke="#21918c"/>
<path d="M1220.7,1114.8 L1241.2,1114.8 L1260.9,1118.2 L1261.7,1129.3 L1248.1,1136.1 L1234.4,1132.7 L1218.2,1125.9Z" fill="#5ec962" stroke="#5ec962"/>
</g>
<g stroke="#1f1f1f" stroke-width="1.6" stroke-linejoin="round" fill="none">
<path d="M1282.3,80.2 L1359.2,42.3 L1427.2,79.0 L1427.2,176.0 L1430.5,186.0 L1413.3,209.4 L1418.9,239.5 L1452.8,272.9 L1467.3,280.3 L1461.6,302.7 L1397.2,421.4 L1322.7,588.0 L1327.8,429.0 L1339.1,333.0 L1341.7,326.7 L1357.3,297.3 L1343.6,285.2 L1340.2,278.5 L1326.9,264.0 L1323.5,255.1 L1328.0,247.3 L1308.4,220.6 L1303.5,208.3 L1297.2,203.8 L1296.8,162.6Z"/>
<path d="M1427.2,79.0 L1600.0,171.5 L1736.4,244.7 L1699.7,325.5 L1624.7,326.0 L1624.7,434.1 L1601.8,435.3 L1577.8,432.8 L1569.0,420.2 L1397.2,421.4 L1461.6,302.7 L1467.3,280.3 L1452.8,272.9 L1418.9,239.5 L1413.3,209.4 L1430.5,186.0 L1427.2,176.0Z"/>
<path d="M1736.4,244.7 L1839.4,299.0 L1841.2,490.0 L1839.9,587.4 L1834.8,592.5 L1838.6,601.3 L1824.7,620.3 L1817.2,622.8 L1815.9,646.8 L1802.0,651.8 L1789.4,654.3 L1781.3,653.8 L1727.5,566.7 L1697.2,567.2 L1703.5,492.7 L1702.3,485.2 L1647.2,485.0 L1602.5,436.6 L1624.7,434.1 L1624.7,326.0 L1699.7,325.5Z"/>
<path d="M1839.4,299.0 L1967.4,365.2 L1967.4,669.5 L1938.4,665.7 L1918.2,669.5 L1900.5,669.5 L1884.0,684.6 L1877.8,679.6 L1862.6,670.8 L1842.4,661.9 L1838.6,656.9 L1815.9,648.0 L1815.9,646.8 L1817.2,622.8 L1824.7,620.3 L1838.6,601.3 L1834.8,592.5 L1839.9,587.4 L1841.2,490.0Z"/>
<path d="M1397.2,421.4 L1569.0,420.2 L1577.8,432.8 L1601.8,435.3 L1602.5,436.6 L1647.2,485.0 L1600.5,486.6 L1599.2,490.9 L1590.4,499.7 L1579.0,502.2 L1476.4,600.0 L1436.8,636.7 L1367.1,605.4 L1322.7,589.3Z"/>
<path d="M1600.5,486.6 L1702.3,485.2 L1703.5,492.7 L1697.2,567.2 L1693.9,590.0 L1718.7,661.9 L1705.3,674.4 L1685.0,676.3 L1667.6,667.6 L1656.0,664.7 L1640.5,706.2 L1623.2,742.9 L1615.4,754.5 L1585.5,786.4 L1579.7,831.8 L1573.9,848.6 L1565.6,859.0 L1568.7,867.4 L1586.4,871.5 L1590.6,879.9 L1595.8,892.3 L1594.7,904.8 L1538.6,906.9 L1513.6,923.5 L1505.3,909.0 L1507.4,890.3 L1512.6,869.5 L1511.5,844.5 L1482.4,846.6 L1467.8,844.5 L1453.3,847.6 L1454.1,829.9 L1478.3,822.1 L1509.2,685.0 L1498.6,667.6 L1446.4,644.4 L1436.8,636.7 L1476.4,600.0 L1579.0,502.2 L1590.4,499.7 L1599.2,490.9Z"/>
<path d="M1322.9,590.2 L1367.1,605.4 L1436.8,636.7 L1446.6,643.7 L1382.2,724.0 L1363.3,760.7 L1353.9,761.7 L1342.7,766.7 L1330.5,766.7 L1324.9,771.8 L1312.6,767.9 L1304.8,762.3 L1295.9,757.8 L1282.6,756.2 L1280.3,764.5 L1262.5,790.1 L1249.1,803.5 L1238.0,793.5 L1231.3,790.1 L1226.9,786.2 L1222.4,784.6 L1217.9,780.1 L1212.4,776.8 L1207.9,769.0 L1203.5,767.3 L1200.1,764.0 L1178.9,762.8 L1181.2,760.6 L1181.2,752.3 L1191.2,745.6 L1190.6,740.0 L1190.3,734.1 L1200.4,716.5 L1225.7,681.1 L1261.0,640.7Z"/>
<path d="M1446.6,643.7 L1498.6,667.6 L1509.2,685.0 L1478.3,822.1 L1454.2,828.8 L1432.7,817.5 L1375.9,812.4 L1374.6,802.3 L1357.0,779.6 L1363.3,760.7 L1382.2,724.0Z"/>
<path d="M1282.6,756.2 L1295.9,757.8 L1304.8,762.3 L1312.6,767.9 L1324.9,771.8 L1330.5,766.7 L1342.7,766.7 L1353.9,761.7 L1363.3,760.7 L1356.1,777.9 L1329.4,799.1 L1327.1,811.3 L1320.4,821.3 L1271.4,827.5 L1264.2,829.1 L1254.7,815.8 L1249.1,803.5 L1262.5,790.1 L1280.3,764.5Z"/>
<path d="M1165.6,766.7 L1170.0,764.0 L1178.9,762.8 L1200.1,764.0 L1203.5,767.3 L1207.9,769.0 L1212.4,776.8 L1217.9,780.1 L1222.4,784.6 L1226.9,786.2 L1231.3,790.1 L1238.0,793.5 L1249.1,803.5 L1254.7,815.8 L1238.0,818.0 L1233.5,815.8 L1226.9,819.7 L1204.6,818.6 L1195.7,825.8 L1193.4,833.6 L1187.9,838.0 L1177.3,824.7Z"/>
<path d="M1188.4,838.6 L1194.5,826.9 L1204.6,818.6 L1226.9,819.7 L1233.5,815.8 L1238.0,818.0 L1254.7,816.9 L1264.2,829.1 L1271.4,826.9 L1273.6,836.9 L1260.3,852.0 L1252.5,852.0 L1250.3,847.5 L1231.3,849.7 L1229.1,857.0 L1211.3,857.0 L1205.7,863.1Z"/>
<path d="M1205.7,863.1 L1211.3,857.0 L1229.1,857.0 L1231.3,849.7 L1250.3,847.5 L1252.5,852.0 L1260.3,852.0 L1273.6,836.9 L1278.1,839.2 L1280.3,861.4 L1283.7,867.0 L1283.7,881.5 L1246.9,882.6 L1240.2,875.9 L1211.3,875.4Z"/>
<path d="M1271.4,827.5 L1312.6,824.7 L1324.9,861.4 L1313.8,857.0 L1310.4,851.4 L1300.4,852.5 L1301.5,858.1 L1312.1,867.0 L1302.1,874.3 L1295.9,867.0 L1284.8,862.6 L1280.3,861.4 L1278.1,839.2 L1272.5,834.7Z"/>
<path d="M1312.6,824.7 L1320.4,821.3 L1327.1,813.5 L1328.2,823.0 L1348.3,822.5 L1349.4,831.4 L1352.8,850.3 L1351.6,868.1 L1338.3,869.2 L1324.9,861.4Z"/>
<path d="M1329.4,799.1 L1356.1,777.9 L1357.0,779.6 L1374.6,802.3 L1375.9,812.4 L1432.7,817.5 L1454.2,828.8 L1452.9,868.0 L1442.8,871.8 L1434.0,870.5 L1408.7,873.0 L1405.0,860.4 L1362.0,840.2 L1354.4,842.7 L1352.8,850.3 L1349.4,831.4 L1348.3,822.5 L1328.2,823.0 L1327.1,813.5Z"/>
<path d="M1354.4,842.7 L1362.0,840.2 L1405.0,860.4 L1408.7,873.0 L1369.6,879.3 L1351.6,868.1 L1353.9,851.4Z"/>
<path d="M1211.3,875.4 L1240.2,875.9 L1246.9,882.6 L1247.5,891.3 L1268.7,908.5 L1271.7,918.6 L1272.7,926.7 L1274.7,944.8 L1280.8,951.9 L1284.8,957.0 L1286.9,965.0 L1288.9,975.2 L1291.9,991.3 L1288.9,1005.5 L1284.8,1027.7 L1288.9,1053.9 L1292.9,1070.1 L1305.0,1090.3 L1317.2,1108.5 L1331.3,1115.6 L1338.6,1126.7 L1340.3,1127.6 L1341.2,1135.3 L1354.0,1139.5 L1358.3,1139.5 L1375.3,1120.7 L1377.9,1100.2 L1402.0,1095.4 L1412.1,1111.5 L1432.3,1118.6 L1462.6,1126.7 L1474.7,1080.2 L1460.6,1070.1 L1458.5,1000.5 L1459.6,999.4 L1438.4,989.3 L1423.2,984.2 L1418.2,971.1 L1411.1,946.9 L1406.1,940.8 L1377.8,932.7 L1359.6,932.7 L1371.7,910.5 L1370.7,896.4 L1365.7,880.2 L1369.6,879.3 L1351.6,868.1 L1338.3,869.2 L1324.9,861.4 L1313.8,857.0 L1310.4,851.4 L1300.4,852.5 L1301.5,858.1 L1312.1,867.0 L1302.1,874.3 L1295.9,867.0 L1284.8,862.6 L1283.7,867.0 L1283.7,881.5Z"/>
<path d="M1365.7,880.2 L1414.1,872.1 L1444.4,872.1 L1432.3,891.3 L1444.4,903.4 L1457.6,922.6 L1466.7,944.8 L1476.8,948.9 L1484.8,981.2 L1459.6,999.4 L1438.4,989.3 L1423.2,984.2 L1418.2,971.1 L1411.1,946.9 L1406.1,940.8 L1377.8,932.7 L1359.6,932.7 L1371.7,910.5 L1370.7,896.4Z"/>
<path d="M1446.0,874.7 L1452.9,868.0 L1453.3,847.6 L1467.8,844.5 L1482.4,846.6 L1511.5,844.5 L1512.6,869.5 L1507.4,890.3 L1505.3,909.0 L1509.5,923.5 L1501.1,924.6 L1478.2,942.3 L1477.2,948.5 L1466.8,944.3 L1456.4,921.5 L1445.0,906.9 L1440.8,898.6 L1432.5,890.3 L1438.7,881.9Z"/>
<path d="M1478.2,942.3 L1501.1,924.6 L1513.6,923.5 L1538.6,906.9 L1546.9,929.8 L1546.9,944.3 L1557.3,946.4 L1559.4,954.7 L1553.1,965.1 L1544.8,968.3 L1553.1,988.0 L1555.2,1004.7 L1528.2,995.3 L1507.4,988.0 L1482.4,984.9 L1476.2,963.1 L1479.3,950.6 L1477.2,948.5Z"/>
<path d="M1538.6,906.9 L1594.7,905.9 L1592.7,921.5 L1598.9,950.6 L1586.4,967.2 L1578.1,983.9 L1578.1,1008.8 L1555.2,1004.7 L1553.1,988.0 L1544.8,968.3 L1553.1,965.1 L1559.4,954.7 L1557.3,946.4 L1546.9,944.3 L1546.9,929.8Z"/>
<path d="M1656.0,664.7 L1664.7,666.6 L1666.6,806.7 L1683.0,817.3 L1683.5,831.3 L1689.0,849.2 L1690.2,877.0 L1687.9,881.5 L1666.5,886.1 L1644.7,879.9 L1601.0,904.8 L1594.7,904.8 L1595.8,892.3 L1590.6,879.9 L1586.4,871.5 L1568.7,867.4 L1565.6,859.0 L1573.9,848.6 L1579.7,831.8 L1585.5,786.4 L1615.4,754.5 L1623.2,742.9 L1640.5,706.2Z"/>
<path d="M1601.0,904.8 L1644.7,879.9 L1666.5,886.1 L1681.1,898.6 L1671.7,909.0 L1673.8,917.3 L1661.3,933.9 L1655.1,955.8 L1628.0,952.7 L1620.8,950.6 L1609.3,961.0 L1611.4,972.4 L1603.1,988.0 L1592.7,990.1 L1590.6,983.9 L1578.1,983.9 L1586.4,967.2 L1598.9,950.6 L1592.7,921.5 L1594.7,905.9Z"/>
<path d="M1578.1,983.9 L1590.6,983.9 L1592.7,990.1 L1603.1,988.0 L1611.4,972.4 L1609.3,961.0 L1620.8,950.6 L1628.0,952.7 L1655.1,955.8 L1671.7,957.9 L1661.3,981.8 L1669.6,1000.5 L1674.8,1022.4 L1665.5,1027.6 L1642.6,1038.0 L1628.0,1034.8 L1603.1,1023.4 L1582.3,1013.0 L1578.1,1008.8Z"/>
<path d="M1666.7,886.0 L1687.9,881.5 L1720.2,881.5 L1731.4,893.7 L1733.6,904.9 L1747.0,908.2 L1763.7,909.4 L1760.4,922.7 L1753.7,931.6 L1755.9,951.7 L1749.2,969.5 L1742.5,985.1 L1718.0,971.8 L1684.6,957.3 L1673.4,957.3 L1655.6,956.2 L1656.7,947.2 L1661.2,933.9 L1672.3,916.0 L1673.4,909.4 L1680.1,899.3Z"/>
<path d="M1664.7,666.6 L1681.1,675.3 L1699.5,673.4 L1717.8,679.2 L1730.0,674.4 L1746.0,667.0 L1746.0,659.9 L1751.5,656.4 L1781.3,653.8 L1789.4,654.3 L1784.3,664.4 L1780.6,684.6 L1774.2,698.5 L1761.6,708.6 L1751.5,711.2 L1740.2,721.3 L1738.9,730.1 L1764.1,736.4 L1774.2,745.3 L1776.8,755.3 L1771.7,793.2 L1757.8,798.3 L1738.9,792.0 L1726.3,776.8 L1708.6,770.5 L1689.6,773.0 L1666.9,797.0 L1666.6,806.7Z"/>
<path d="M1697.2,567.2 L1727.5,566.7 L1781.3,653.8 L1751.5,656.4 L1746.0,659.9 L1746.0,667.0 L1717.4,679.6 L1705.3,674.4 L1718.7,661.9 L1693.9,590.0Z"/>
<path d="M1789.4,654.3 L1815.9,648.0 L1838.6,656.9 L1842.4,661.9 L1862.6,670.8 L1877.8,679.6 L1857.6,685.9 L1834.8,697.3 L1819.7,709.9 L1809.6,726.3 L1799.5,727.6 L1774.2,745.3 L1764.1,736.4 L1738.9,730.1 L1740.2,721.3 L1751.5,711.2 L1761.6,708.6 L1774.2,698.5 L1780.6,684.6 L1784.3,664.4Z"/>
<path d="M1877.8,679.6 L1884.0,684.6 L1890.4,696.0 L1890.4,704.8 L1886.6,713.7 L1880.3,722.5 L1872.7,730.0 L1865.2,735.2 L1867.7,747.8 L1845.0,756.6 L1827.3,742.7 L1815.9,726.3 L1809.6,726.3 L1819.7,709.9 L1834.8,697.3 L1857.6,685.9Z"/>
<path d="M1774.2,745.3 L1799.5,727.6 L1815.9,726.3 L1827.3,742.7 L1845.0,756.6 L1843.7,762.9 L1850.0,773.0 L1857.6,789.4 L1829.8,810.0 L1827.2,809.0 L1796.0,799.0 L1773.7,794.6 L1771.7,793.2 L1776.8,755.3Z"/>
<path d="M1666.7,800.1 L1689.0,773.4 L1706.9,771.1 L1720.2,775.6 L1735.9,789.0 L1762.6,804.6 L1766.0,818.0 L1773.7,824.6 L1789.4,853.6 L1787.1,862.5 L1769.3,869.2 L1735.9,875.9 L1713.6,880.4 L1690.2,877.0 L1689.0,849.2 L1683.5,831.3 L1683.5,815.7Z"/>
<path d="M1762.6,804.6 L1761.5,793.4 L1773.7,794.6 L1796.0,799.0 L1827.2,809.0 L1823.9,822.4 L1833.9,853.6 L1825.0,867.0 L1813.9,873.7 L1805.0,891.5 L1802.7,896.0 L1788.2,893.7 L1784.9,880.4 L1787.1,862.5 L1789.4,853.6 L1773.7,824.6 L1766.0,818.0Z"/>
<path d="M1720.2,881.5 L1735.9,875.9 L1769.3,869.2 L1787.1,862.5 L1784.9,880.4 L1788.2,893.7 L1771.5,902.7 L1763.7,909.4 L1747.0,908.2 L1733.6,904.9 L1731.4,893.7Z"/>
<path d="M1763.7,909.4 L1771.5,902.7 L1788.2,893.7 L1802.7,896.0 L1811.6,908.2 L1829.5,902.7 L1849.5,911.6 L1845.1,925.0 L1851.8,956.2 L1862.9,955.0 L1857.3,985.1 L1873.0,1003.0 L1886.3,1004.1 L1888.6,1018.6 L1881.9,1040.9 L1862.9,1037.5 L1848.4,1037.5 L1827.2,987.4 L1811.6,984.0 L1778.2,989.6 L1744.8,995.2 L1742.5,985.1 L1749.2,969.5 L1755.9,951.7 L1753.7,931.6 L1760.4,922.7Z"/>
<path d="M1640.1,1038.3 L1642.6,1038.0 L1665.5,1027.6 L1674.8,1022.4 L1669.6,1000.5 L1661.3,981.8 L1671.7,957.9 L1673.4,957.3 L1684.6,957.3 L1718.0,971.8 L1742.5,985.1 L1744.8,995.2 L1768.2,991.8 L1753.7,1016.4 L1744.1,1030.0 L1721.2,1092.4 L1718.1,1112.2 L1708.8,1115.3 L1675.5,1114.3 L1640.1,1120.5 L1633.9,1109.0 L1638.0,1096.6 L1634.9,1088.2 L1638.0,1071.6 L1641.2,1042.5Z"/>
<path d="M1744.1,1030.0 L1753.7,1016.4 L1768.2,991.8 L1778.2,989.6 L1811.6,984.0 L1827.2,987.4 L1848.4,1037.5 L1848.1,1038.3 L1825.3,1042.5 L1800.3,1050.8 L1796.1,1071.6 L1794.0,1088.2 L1779.5,1098.7 L1760.8,1115.3 L1754.5,1123.6 L1740.0,1140.3 L1733.7,1148.6 L1721.2,1159.0 L1702.5,1171.5 L1692.1,1181.9 L1660.9,1183.9 L1640.1,1120.5 L1675.5,1114.3 L1708.8,1115.3 L1718.1,1112.2 L1721.2,1092.4Z"/>
<path d="M1458.5,1000.5 L1464.7,993.2 L1476.2,984.9 L1482.4,984.9 L1507.4,988.0 L1528.2,995.3 L1555.2,1004.7 L1578.1,1008.8 L1582.3,1013.0 L1603.1,1023.4 L1628.0,1034.8 L1640.1,1038.3 L1641.2,1042.5 L1638.0,1071.6 L1621.4,1077.8 L1613.1,1090.3 L1596.4,1104.9 L1592.3,1115.3 L1573.5,1115.3 L1571.5,1123.6 L1559.0,1121.5 L1557.9,1113.2 L1544.4,1098.7 L1517.4,1086.2 L1498.6,1077.8 L1473.7,1078.9 L1459.1,1069.5 L1457.4,1015.0Z"/>
<path d="M1534.0,1127.8 L1546.5,1123.6 L1559.0,1121.5 L1571.5,1123.6 L1573.5,1115.3 L1592.3,1115.3 L1596.4,1104.9 L1613.1,1090.3 L1621.4,1077.8 L1638.0,1071.6 L1634.9,1088.2 L1638.0,1096.6 L1633.9,1109.0 L1640.1,1120.5 L1660.9,1183.9 L1638.0,1188.1 L1604.7,1190.2 L1588.1,1191.2 L1573.5,1179.8 L1573.5,1165.2 L1554.8,1175.6 L1546.5,1171.5 L1534.0,1156.9 L1533.0,1146.5Z"/>
<path d="M1473.7,1078.9 L1498.6,1077.8 L1517.4,1086.2 L1544.4,1098.7 L1557.9,1113.2 L1559.0,1121.5 L1546.5,1123.6 L1534.0,1127.8 L1533.0,1146.5 L1534.0,1156.9 L1546.5,1171.5 L1554.8,1175.6 L1573.5,1165.2 L1573.5,1179.8 L1588.1,1191.2 L1577.7,1202.7 L1594.3,1215.1 L1593.5,1218.2 L1581.6,1218.2 L1560.2,1215.9 L1549.5,1202.8 L1541.2,1218.2 L1534.0,1224.2 L1521.0,1227.8 L1515.0,1212.3 L1509.7,1195.7 L1523.6,1178.7 L1498.6,1173.5 L1492.4,1167.3 L1477.8,1142.3 L1464.3,1127.8 L1462.6,1126.7 L1474.7,1080.2Z"/>
<path d="M1462.6,1126.7 L1464.3,1127.8 L1477.8,1142.3 L1470.6,1143.4 L1452.9,1148.6 L1442.5,1171.5 L1440.1,1171.9 L1450.8,1179.0 L1444.3,1186.7 L1412.1,1185.7 L1391.6,1182.2 L1384.7,1173.7 L1373.6,1153.2 L1358.3,1139.5 L1375.3,1120.7 L1377.9,1100.2 L1402.0,1095.4 L1412.1,1111.5 L1432.3,1118.6Z"/>
<path d="M1442.5,1171.5 L1452.9,1148.6 L1470.6,1143.4 L1477.8,1142.3 L1492.4,1167.3 L1498.6,1173.5 L1523.6,1178.7 L1509.7,1195.7 L1485.9,1207.5 L1471.0,1219.4 L1472.2,1211.1 L1463.9,1205.2 L1456.8,1199.2 L1446.1,1197.4 L1444.3,1186.7 L1450.8,1179.0 L1440.1,1171.9Z"/>
<path d="M1521.0,1227.8 L1534.0,1224.2 L1541.2,1218.2 L1549.5,1202.8 L1560.2,1215.9 L1581.6,1218.2 L1593.5,1218.2 L1582.8,1233.7 L1572.1,1245.6 L1561.4,1250.3 L1556.6,1263.4 L1551.9,1265.2 L1525.7,1266.4Z"/>
<path d="M1448.5,1256.9 L1455.6,1245.6 L1462.7,1231.3 L1471.0,1221.8 L1471.0,1219.4 L1485.9,1207.5 L1509.7,1195.7 L1515.0,1212.3 L1521.0,1227.8 L1525.7,1266.4 L1505.5,1271.1 L1484.1,1271.7 L1454.4,1281.8Z"/>
<path d="M1392.6,1182.6 L1399.7,1180.2 L1409.2,1182.6 L1419.9,1185.6 L1433.0,1186.7 L1444.3,1186.7 L1446.1,1197.4 L1456.8,1199.2 L1463.9,1205.2 L1472.2,1211.1 L1471.0,1221.8 L1462.7,1231.3 L1455.6,1245.6 L1448.5,1256.9 L1442.5,1258.1 L1436.6,1252.1 L1429.4,1237.3 L1422.3,1237.3 L1412.8,1246.8 L1408.0,1258.7 L1405.7,1264.6 L1393.8,1233.7 L1384.3,1220.6 L1386.0,1215.9 L1396.2,1209.9 L1401.5,1199.2 L1394.4,1186.2Z"/>
<path d="M1405.7,1264.6 L1412.8,1246.8 L1422.3,1237.3 L1429.4,1237.3 L1436.6,1252.1 L1442.5,1258.1 L1448.5,1256.9 L1448.5,1271.1 L1418.7,1274.1 L1409.2,1268.2Z"/>
<path d="M1379.5,1238.5 L1392.0,1233.7 L1393.8,1233.7 L1405.7,1264.6 L1409.2,1268.2 L1418.7,1274.1 L1448.5,1271.1 L1454.4,1281.8 L1443.7,1293.1 L1429.4,1297.9 L1421.1,1303.8 L1415.2,1299.1 L1404.5,1284.8 L1400.3,1280.1 L1389.0,1290.8 L1385.5,1290.8 L1381.3,1262.2Z"/>
<path d="M1360.0,1165.2 L1373.6,1153.2 L1384.7,1173.7 L1376.2,1178.8 L1369.4,1184.0 L1362.5,1181.4Z"/>
<path d="M1365.9,1185.7 L1369.4,1184.0 L1376.2,1178.8 L1384.7,1173.7 L1391.6,1182.2 L1394.4,1186.2 L1401.5,1199.2 L1396.2,1209.9 L1386.0,1215.9 L1383.0,1202.7 L1368.5,1201.0Z"/>
<path d="M1300.2,1233.5 L1316.4,1241.2 L1325.0,1246.3 L1330.9,1242.0 L1340.3,1239.5 L1350.6,1233.5 L1371.1,1221.5 L1384.3,1217.3 L1384.3,1220.6 L1393.8,1233.7 L1392.0,1233.7 L1379.5,1238.5 L1381.3,1262.2 L1385.5,1290.8 L1384.7,1292.4 L1360.8,1305.2 L1343.7,1310.4 L1323.2,1305.2 L1326.7,1286.4 L1314.7,1260.8 L1307.9,1250.6Z"/>
<path d="M1341.2,1207.9 L1351.4,1203.6 L1352.3,1195.1 L1365.1,1192.5 L1368.5,1201.0 L1383.0,1202.7 L1386.0,1215.9 L1384.3,1217.3 L1371.1,1221.5 L1350.6,1233.5 L1340.3,1239.5 L1330.9,1242.0 L1331.8,1235.2 L1336.9,1231.8 L1335.2,1226.7Z"/>
<path d="M1326.7,1189.1 L1343.7,1188.2 L1359.1,1183.1 L1364.2,1184.0 L1365.1,1192.5 L1352.3,1195.1 L1351.4,1203.6 L1341.2,1207.9Z"/>
<path d="M1313.8,1187.4 L1326.7,1189.1 L1341.2,1207.9 L1335.2,1226.7 L1336.9,1231.8 L1331.8,1235.2 L1330.9,1242.0 L1325.0,1246.3 L1316.4,1241.2 L1300.2,1233.5 L1302.7,1221.5 L1309.6,1197.6Z"/>
<path d="M1341.2,1135.3 L1354.0,1139.5 L1358.3,1139.5 L1373.6,1153.2 L1360.0,1165.2 L1360.8,1181.4 L1359.1,1183.1 L1343.7,1188.2 L1326.7,1189.1 L1314.7,1187.4 L1313.8,1175.4 L1319.8,1160.0 L1335.2,1141.2Z"/>
<path d="M1294.2,1136.1 L1319.8,1131.9 L1338.6,1126.7 L1340.3,1127.6 L1341.2,1135.3 L1335.2,1141.2 L1319.8,1160.0 L1313.8,1175.4 L1297.6,1166.9 L1289.1,1158.3 L1287.4,1148.9 L1290.8,1146.4Z"/>
<path d="M1229.3,1161.7 L1244.7,1160.0 L1250.6,1163.5 L1254.9,1158.3 L1260.9,1153.2 L1262.6,1139.5 L1274.6,1138.7 L1284.0,1140.4 L1290.8,1146.4 L1287.4,1148.9 L1289.1,1158.3 L1297.6,1166.9 L1313.8,1177.1 L1314.7,1187.4 L1309.6,1197.6 L1302.7,1221.5 L1300.2,1233.5 L1285.7,1219.8 L1268.6,1204.5 L1234.4,1175.4Z"/>
<path d="M1260.9,1118.2 L1278.8,1115.6 L1292.5,1117.3 L1309.6,1115.6 L1330.9,1116.5 L1338.6,1126.7 L1319.8,1131.9 L1294.2,1136.1 L1290.8,1146.4 L1284.0,1140.4 L1274.6,1138.7 L1262.6,1139.5Z"/>
<path d="M1204.5,1140.4 L1218.2,1125.9 L1234.4,1132.7 L1248.1,1136.1 L1261.7,1129.3 L1262.6,1139.5 L1260.9,1153.2 L1254.9,1158.3 L1250.6,1163.5 L1244.7,1160.0 L1229.3,1161.7Z"/>
<path d="M1220.7,1114.8 L1241.2,1114.8 L1260.9,1118.2 L1261.7,1129.3 L1248.1,1136.1 L1234.4,1132.7 L1218.2,1125.9Z"/>
</g>
<g stroke="#1f1f1f" stroke-width="1.4" fill="none" stroke-linejoin="round">
<path d="M1817.2,638.0 L1829.8,636.7 L1852.5,644.2 L1882.8,656.9 L1900.5,669.5"/>
<path d="M1509.2,685.0 L1526.6,696.6 L1542.0,700.4 L1557.5,700.4 L1576.8,692.7 L1594.2,681.1 L1603.8,663.7 L1607.7,640.6 L1607.7,637.7 L1612.5,637.7 L1617.4,642.5 L1629.0,658.9 L1640.5,660.8 L1656.0,664.7"/>
<path d="M1269.7,883.2 L1269.7,892.3 L1280.8,896.4 L1301.0,912.5 L1313.1,915.6 L1331.3,916.6 L1371.7,911.5"/>
<path d="M1274.7,944.8 L1288.9,940.8 L1310.1,931.7 L1321.2,940.8 L1316.0,944.0 L1313.1,961.0 L1316.2,975.2 L1312.1,981.2 L1310.1,1001.4 L1313.1,1015.6 L1313.1,1025.7 L1325.3,1041.8 L1349.5,1053.9 L1361.6,1043.8 L1434.3,1029.7 L1442.4,1035.8 L1445.5,1059.0 L1460.6,1070.1"/>
<path d="M1310.1,931.7 L1333.3,933.7 L1359.6,932.7"/>
<path d="M1274.7,944.8 L1286.9,941.8 L1292.9,946.9 L1295.0,957.0 L1288.9,958.0 L1280.8,951.9"/>
<path d="M1284.8,1027.7 L1299.0,1021.6 L1312.1,1021.6"/>
<path d="M1292.9,1053.9 L1303.0,1049.9 L1315.2,1056.0 L1333.3,1058.0 L1338.4,1069.1 L1355.6,1074.1 L1366.7,1057.0 L1361.6,1043.8"/>
<path d="M1366.7,1057.0 L1367.7,1088.3 L1375.8,1100.4 L1402.0,1095.4"/>
<path d="M1331.8,1112.2 L1340.3,1127.6"/>
<path d="M1395.6,1186.7 L1412.8,1198.0 L1417.5,1211.1 L1421.7,1223.0 L1421.1,1233.7"/>
<path d="M1421.7,1223.0 L1437.8,1220.0 L1444.3,1209.9 L1444.3,1186.7"/>
<path d="M1437.8,1220.0 L1455.6,1245.6"/>
</g>

</g>
<text x="7.5" y="35" font-size="22.5" font-weight="normal" fill="#1e1e1e" textLength="69" lengthAdjust="spacing" >Layers</text>
<rect x="735" y="17" width="20" height="20" rx="4" fill="none" stroke="#6b6b6b" stroke-width="2"/><rect x="739.5" y="25" width="8" height="8" fill="none" stroke="#6b6b6b" stroke-width="1.8"/><path d="M743,25 V21.5 H751 V29.5 H747.5" fill="none" stroke="#6b6b6b" stroke-width="1.8"/><rect x="763" y="17" width="20" height="20" rx="4" fill="none" stroke="#6b6b6b" stroke-width="2"/><path d="M767.5,21.5 L778.5,32.5 M778.5,21.5 L767.5,32.5" stroke="#6b6b6b" stroke-width="3.2"/>
<g><path d="M20,72 L34,67 L36,75 L22,80Z" fill="#f2df3a"/><path d="M18,77 L34,72 L36,80 L20,85Z" fill="#6d9ed6"/><path d="M17,81 L33,77 L36,86 L31,88Z" fill="#e23b3b"/><path d="M26,80 L33,72 L41,79 L33,88Z" fill="#d9a35c" stroke="#a86f2c" stroke-width="1"/><path d="M35,75 L45,65" stroke="#c9852e" stroke-width="3.2" stroke-linecap="round"/></g>
<g fill="none" stroke="#8a8a8a" stroke-width="1.8"><path d="M68.8,79 V89.5 H81"/><rect x="73" y="69" width="14" height="16"/><rect x="77.5" y="64.5" width="15.5" height="17"/></g><path d="M83,81 V63 Q83,60 86,60 Q89,60 89,63 V78" fill="none" stroke="#3f6aa3" stroke-width="1.8"/>
<rect x="84.5" y="80.5" width="11" height="11" rx="2" fill="#4f9a55" stroke="#3d7d43" stroke-width="0.8"/><path d="M90.0,82.5 V89.5 M86.5,86.0 H93.5" stroke="#fff" stroke-width="2"/>
<path d="M117.5,76 Q132,62 147,78 Q132,90 117.5,76Z" fill="#fff" stroke="#8c8c8c" stroke-width="1.3"/><path d="M117,69 Q131,61 145.5,68" fill="none" stroke="#8c8c8c" stroke-width="1.2"/><circle cx="131.5" cy="76" r="7.5" fill="#6f9fd8" stroke="#4b77b3" stroke-width="1"/><circle cx="131.5" cy="75.5" r="3" fill="#111"/><circle cx="130.5" cy="74.5" r="1" fill="#fff"/>
<path d="M140.4,87 L151.5,87 L145.95,92.5Z" fill="#5a5a5a"/>
<path d="M169,61.5 H195.0 V65.0 L185.0,75.5 V91.5 L179.0,88.5 V75.5 L169,65.0Z" fill="#6e9bd1" stroke="#3d5f8f" stroke-width="1.3"/><rect x="170.3" y="62.7" width="23.4" height="3.0" fill="#f3e64a"/>
<path d="M190.5,87 L200.5,87 L195.5,92.5Z" fill="#5a5a5a"/>
<path d="M235.5,67 C234,62.5 225,61.8 222.8,66.5 C221.2,70.5 224.5,73.2 229.5,73.2 C223.5,73.4 220,77 221,81.2 C222.5,86.5 232.5,87 236.5,81.5" fill="none" stroke="#5b2c7d" stroke-width="2.9" stroke-linecap="round"/>
<path d="M234,79 Q234,77 236,77 H246 Q248,77 248,79 V92 H244 L242.5,86 L239.5,86 L238,92 H234Z" fill="#a4a4a4" stroke="#8f8f8f" stroke-width="1"/>
<path d="M260.3,73 L275.7,73 L268.0,80.7Z" fill="#5a5a5a"/>
<path d="M294,63.5 H319.5" stroke="#8a8a8a" stroke-width="1.6"/><path d="M295,63.5 V88 M295,72 H300 M295,84 H300" stroke="#b5b5b5" stroke-width="1.6" fill="none"/><rect x="300.5" y="69" width="6" height="6" fill="#f99d1c"/><rect x="302.5" y="71" width="2" height="2" fill="#f3e64a"/><rect x="300.5" y="81" width="6" height="6" fill="#f99d1c"/><rect x="302.5" y="83" width="2" height="2" fill="#f3e64a"/>
<path d="M310.5,62.5 H316.5 V77.5 H321.5 L313.5,88.5 L305.5,77.5 H310.5Z" fill="#6e9bd1" stroke="#3d5f8f" stroke-width="1.6" stroke-linejoin="round"/>
<path d="M344,63.5 H369.5" stroke="#8a8a8a" stroke-width="1.6"/><path d="M345,63.5 V88 M345,72 H350 M345,84 H350" stroke="#b5b5b5" stroke-width="1.6" fill="none"/><rect x="350.5" y="69" width="6" height="6" fill="#f99d1c"/><rect x="352.5" y="71" width="2" height="2" fill="#f3e64a"/><rect x="350.5" y="81" width="6" height="6" fill="#f99d1c"/><rect x="352.5" y="83" width="2" height="2" fill="#f3e64a"/>
<path d="M359,87.5 H365 V71.5 H371 L362,61 L353,71.5 H359Z" fill="#6e9bd1" stroke="#3d5f8f" stroke-width="1.6" stroke-linejoin="round"/>
<rect x="392.5" y="62.5" width="23" height="23" fill="none" stroke="#7f7f7f" stroke-width="1.8"/>
<rect x="407.5" y="80" width="12.5" height="9.8" rx="2.5" fill="#e9464f"/><rect x="410" y="83.8" width="7.5" height="2.2" fill="#fff"/>
<rect x="0.5" y="108" width="786.5" height="680.5" fill="#fff" stroke="#bcbcbc" stroke-width="1"/>
<rect x="1.5" y="110" width="784" height="35.5" fill="#dcdcdc"/>
<path d="M14,123.7 L29.5,123.7 L21.75,132Z" fill="#5a5a5a"/>
<rect x="49.5" y="115" width="25.6" height="25.6" rx="1.5" fill="#fff" stroke="#b9b9b9" stroke-width="2"/><path d="M54.3,127.4 L61.7,136.6 L69.9,120.2" fill="none" stroke="#232323" stroke-width="3.4" stroke-linecap="butt" stroke-linejoin="miter"/>
<path d="M91,121 Q92,115.5 98,116.5 Q104,119.5 109.5,117 Q118,114 119.5,121 Q120,127 117.5,129 Q114,131 109,128 Q102,126 97.5,132 Q92,138.5 89.5,132 Q88.5,126 91,121Z" fill="#e8e8e8" stroke="#8c8c8c" stroke-width="1.6"/>
<text x="131.5" y="137" font-size="26" font-weight="bold" fill="#000" textLength="346" lengthAdjust="spacing" >tcd_adm2_vacc_coverage</text>
<rect x="132" y="140" width="344.5" height="3" fill="#000"/>
<rect x="745" y="113" width="31" height="31" rx="3" fill="#fbfbfb"/>
<rect x="748.5" y="121.5" width="23" height="12" rx="2" fill="#f4f4f4" stroke="#666" stroke-width="1.8"/>
<path d="M752,117 V121 M757.5,117 V121 M763,117 V121 M768,117 V121 M752,134 V138.5 M757.5,134 V138.5 M763,134 V138.5 M768,134 V138.5" stroke="#666" stroke-width="1.4"/>
<rect x="89.2" y="169.2" width="25.6" height="25.6" rx="1.5" fill="#fff" stroke="#b9b9b9" stroke-width="2"/><path d="M94.0,181.6 L101.4,190.79999999999998 L109.6,174.39999999999998" fill="none" stroke="#232323" stroke-width="3.4" stroke-linecap="butt" stroke-linejoin="miter"/>
<rect x="129" y="149" width="66" height="66.5" fill="#440154" stroke="#1a1a1a" stroke-width="2"/>
<text x="207.5" y="191.5" font-size="27.5" font-weight="normal" fill="#222" textLength="137" lengthAdjust="spacing" >51,9 - 59,4</text>
<rect x="89.2" y="241.2" width="25.6" height="25.6" rx="1.5" fill="#fff" stroke="#b9b9b9" stroke-width="2"/><path d="M94.0,253.6 L101.4,262.8 L109.6,246.39999999999998" fill="none" stroke="#232323" stroke-width="3.4" stroke-linecap="butt" stroke-linejoin="miter"/>
<rect x="129" y="221" width="66" height="66.5" fill="#3b528b" stroke="#1a1a1a" stroke-width="2"/>
<text x="207.5" y="263.5" font-size="27.5" font-weight="normal" fill="#222" textLength="139.5" lengthAdjust="spacing" >59,4 - 66,9</text>
<rect x="89.2" y="313.2" width="25.6" height="25.6" rx="1.5" fill="#fff" stroke="#b9b9b9" stroke-width="2"/><path d="M94.0,325.59999999999997 L101.4,334.8 L109.6,318.4" fill="none" stroke="#232323" stroke-width="3.4" stroke-linecap="butt" stroke-linejoin="miter"/>
<rect x="129" y="293" width="66" height="66.5" fill="#21918c" stroke="#1a1a1a" stroke-width="2"/>
<text x="207.5" y="335.5" font-size="27.5" font-weight="normal" fill="#222" textLength="135" lengthAdjust="spacing" >66,9 - 74,3</text>
<rect x="89.2" y="385.2" width="25.6" height="25.6" rx="1.5" fill="#fff" stroke="#b9b9b9" stroke-width="2"/><path d="M94.0,397.59999999999997 L101.4,406.8 L109.6,390.4" fill="none" stroke="#232323" stroke-width="3.4" stroke-linecap="butt" stroke-linejoin="miter"/>
<rect x="129" y="365" width="66" height="66.5" fill="#5ec962" stroke="#1a1a1a" stroke-width="2"/>
<text x="207.5" y="407.5" font-size="27.5" font-weight="normal" fill="#222" textLength="135" lengthAdjust="spacing" >74,3 - 81,8</text>
<rect x="89.2" y="457.2" width="25.6" height="25.6" rx="1.5" fill="#fff" stroke="#b9b9b9" stroke-width="2"/><path d="M94.0,469.59999999999997 L101.4,478.8 L109.6,462.4" fill="none" stroke="#232323" stroke-width="3.4" stroke-linecap="butt" stroke-linejoin="miter"/>
<rect x="129" y="437" width="66" height="66.5" fill="#fde725" stroke="#1a1a1a" stroke-width="2"/>
<text x="207.5" y="479.5" font-size="27.5" font-weight="normal" fill="#222" textLength="141.5" lengthAdjust="spacing" >81,8 - 89,3</text>
<rect x="51" y="509" width="26" height="30" rx="2.5" fill="#eeeeee" stroke="#8f8f8f" stroke-width="1.6"/>
<path d="M51.5,516.5 H76.5" stroke="#8f8f8f" stroke-width="1.2"/>
<path d="M55,513 H59 M62,513 H73 M55,522.5 H59 M62,522.5 H73 M55,528.5 H59 M62,528.5 H73 M55,534.5 H59 M62,534.5 H73" stroke="#8a8a8a" stroke-width="1.5"/>
<text x="92" y="533.5" font-size="26" font-weight="bold" fill="#222" textLength="375" lengthAdjust="spacing" >vaccination_coverage_adm2</text>
<rect x="49.4" y="547" width="25.6" height="25.6" rx="1.5" fill="#fff" stroke="#b9b9b9" stroke-width="2"/><path d="M54.199999999999996,559.4 L61.599999999999994,568.6 L69.8,552.2" fill="none" stroke="#232323" stroke-width="3.4" stroke-linecap="butt" stroke-linejoin="miter"/>
<rect x="89" y="545" width="30.5" height="30" fill="#83b46f" stroke="#1a1a1a" stroke-width="1.8"/>
<text x="131.5" y="569" font-size="26" font-weight="bold" fill="#222" textLength="471" lengthAdjust="spacing" >tcd_admbnda_adm2_20250212_AB</text>
<path d="M14,592 L29.6,592 L21.8,600Z" fill="#5a5a5a"/>
<rect x="49.4" y="583" width="25.6" height="25.6" rx="1.5" fill="#fff" stroke="#b9b9b9" stroke-width="2"/><path d="M54.199999999999996,595.4 L61.599999999999994,604.6 L69.8,588.2" fill="none" stroke="#232323" stroke-width="3.4" stroke-linecap="butt" stroke-linejoin="miter"/>
<rect x="92.0" y="584.0" width="8.6" height="8.6" fill="#2c3e58"/>
<rect x="100.6" y="584.0" width="8.6" height="8.6" fill="#a9c6e6"/>
<rect x="109.2" y="584.0" width="8.6" height="8.6" fill="#2c3e58"/>
<rect x="92.0" y="592.6" width="8.6" height="8.6" fill="#a9c6e6"/>
<rect x="100.6" y="592.6" width="8.6" height="8.6" fill="#2c3e58"/>
<rect x="109.2" y="592.6" width="8.6" height="8.6" fill="#a9c6e6"/>
<rect x="92.0" y="601.2" width="8.6" height="8.6" fill="#2c3e58"/>
<rect x="100.6" y="601.2" width="8.6" height="8.6" fill="#a9c6e6"/>
<text x="131.5" y="605" font-size="26" font-weight="bold" fill="#222" textLength="206" lengthAdjust="spacing" >OpenStreetMap</text>
<rect x="380.0" y="794.5" width="1.6" height="1.6" fill="#9a9a9a"/>
<rect x="386.2" y="794.5" width="1.6" height="1.6" fill="#9a9a9a"/>
<rect x="392.4" y="794.5" width="1.6" height="1.6" fill="#9a9a9a"/>
<rect x="398.6" y="794.5" width="1.6" height="1.6" fill="#9a9a9a"/>
<rect x="404.8" y="794.5" width="1.6" height="1.6" fill="#9a9a9a"/>
<rect x="411.0" y="794.5" width="1.6" height="1.6" fill="#9a9a9a"/>
<rect x="794.5" y="665.0" width="1.6" height="1.6" fill="#9a9a9a"/>
<rect x="794.5" y="671.0" width="1.6" height="1.6" fill="#9a9a9a"/>
<rect x="794.5" y="677.0" width="1.6" height="1.6" fill="#9a9a9a"/>
<rect x="794.5" y="683.0" width="1.6" height="1.6" fill="#9a9a9a"/>
<rect x="794.5" y="689.0" width="1.6" height="1.6" fill="#9a9a9a"/>
<rect x="794.5" y="695.0" width="1.6" height="1.6" fill="#9a9a9a"/>
<text x="8" y="829" font-size="22.5" font-weight="normal" fill="#1e1e1e" textLength="86" lengthAdjust="spacing" >Browser</text>
<rect x="735" y="811" width="20" height="20" rx="4" fill="none" stroke="#6b6b6b" stroke-width="2"/><rect x="739.5" y="819" width="8" height="8" fill="none" stroke="#6b6b6b" stroke-width="1.8"/><path d="M743,819 V815.5 H751 V823.5 H747.5" fill="none" stroke="#6b6b6b" stroke-width="1.8"/><rect x="763" y="811" width="20" height="20" rx="4" fill="none" stroke="#6b6b6b" stroke-width="2"/><path d="M767.5,815.5 L778.5,826.5 M778.5,815.5 L767.5,826.5" stroke="#6b6b6b" stroke-width="3.2"/>
<rect x="19" y="857" width="22.5" height="22.5" fill="none" stroke="#7f7f7f" stroke-width="1.8"/>
<rect x="34.5" y="873.5" width="11.5" height="11.5" rx="2" fill="#4f9a55" stroke="#3d7d43" stroke-width="0.8"/><path d="M40.25,875.5 V883.0 M36.5,879.25 H44.0" stroke="#fff" stroke-width="2"/>
<path d="M71,868 Q73,857 84,857 Q90,857 93,861 L95.5,857.5 V868.5 H85 L89,864.5 Q86,862 83,862 Q77,862 76,868Z" fill="#5d93d3" stroke="#3e6fae" stroke-width="1"/><path d="M93,871 Q91,882 80,882 Q74,882 71,878 L68.5,881.5 V870.5 H79 L75,874.5 Q78,877 81,877 Q87,877 88,871Z" fill="#5d93d3" stroke="#3e6fae" stroke-width="1"/>
<path d="M119,855.5 H145 V859.0 L135,869.5 V885.5 L129,882.5 V869.5 L119,859.0Z" fill="#6e9bd1" stroke="#3d5f8f" stroke-width="1.3"/><rect x="120.3" y="856.7" width="23.4" height="3" fill="#f3e64a"/>
<path d="M170,858.5 H195.5" stroke="#8a8a8a" stroke-width="1.6"/><path d="M171,858.5 V881 M171,867 H175 M171,878 H175" stroke="#b5b5b5" stroke-width="1.6" fill="none"/><rect x="175.5" y="864" width="5.5" height="5.5" fill="#f99d1c"/><rect x="175.5" y="875" width="5.5" height="5.5" fill="#f99d1c"/><path d="M185,881.5 H190.5 V866.5 H196 L187.8,855.5 L179.5,866.5 H185Z" fill="#6e9bd1" stroke="#3d5f8f" stroke-width="1.5" stroke-linejoin="round"/>
<circle cx="232" cy="870" r="12.6" fill="#5b8ccb" stroke="#3d6aa5" stroke-width="1.3"/><text x="228" y="878.5" font-size="17" font-style="italic" font-weight="bold" font-family="Liberation Serif, serif" fill="#fff">i</text>
<rect x="0.5" y="902" width="786.5" height="442" fill="#fff" stroke="#bcbcbc" stroke-width="1"/>
<rect x="2.5" y="1228" width="401.5" height="35.5" fill="#dcdcdc"/>
<text x="84" y="931" font-size="25.3" font-weight="normal" fill="#222" textLength="252.5" lengthAdjust="spacing" >ArcGIS REST Servers</text>
<text x="84" y="967" font-size="25.3" font-weight="normal" fill="#222" textLength="105.5" lengthAdjust="spacing" >MapTiler</text>
<text x="84" y="1003" font-size="25.3" font-weight="normal" fill="#222" textLength="63.3" lengthAdjust="spacing" >STAC</text>
<text x="84" y="1039" font-size="25.3" font-weight="normal" fill="#222" textLength="151.8" lengthAdjust="spacing" >WMS/WMTS</text>
<text x="84" y="1075" font-size="25.3" font-weight="normal" fill="#222" textLength="89.0" lengthAdjust="spacing" >Scenes</text>
<text x="84" y="1111" font-size="25.3" font-weight="normal" fill="#222" textLength="164.9" lengthAdjust="spacing" >SensorThings</text>
<text x="84" y="1147" font-size="25.3" font-weight="normal" fill="#222" textLength="145.3" lengthAdjust="spacing" >Vector Tiles</text>
<text x="84" y="1183" font-size="25.3" font-weight="normal" fill="#222" textLength="115.8" lengthAdjust="spacing" >XYZ Tiles</text>
<text x="115.5" y="1219" font-size="25.3" font-weight="normal" fill="#222" textLength="276.6" lengthAdjust="spacing" >Mapzen Global Terrain</text>
<text x="115.5" y="1255" font-size="25.3" font-weight="normal" fill="#222" textLength="193.2" lengthAdjust="spacing" >OpenStreetMap</text>
<text x="84" y="1291" font-size="25.3" font-weight="normal" fill="#222" textLength="59.9" lengthAdjust="spacing" >WCS</text>
<text x="84" y="1327" font-size="25.3" font-weight="normal" fill="#222" textLength="312.7" lengthAdjust="spacing" >WFS / OGC API - Features</text>
<ellipse cx="56.2" cy="922" rx="15.4" ry="13.6" fill="#fff" stroke="#4f86c6" stroke-width="1.8"/><ellipse cx="56.2" cy="922" rx="6.5" ry="13.6" fill="none" stroke="#4f86c6" stroke-width="1.2"/><path d="M41.2,922 H71.2" stroke="#a9c5e6" stroke-width="2.2"/><path d="M43.2,915.5 H69.2 M43.2,928.5 H69.2" stroke="#4f86c6" stroke-width="1.1"/>
<path d="M47.8,915 L50,923 M59.5,915 L54,925 M59.5,915 L65.1,915" fill="none" stroke="#222" stroke-width="1.4"/><circle cx="47.8" cy="915" r="2.2" fill="#fff" stroke="#222" stroke-width="1.3"/><circle cx="59.5" cy="915" r="2.2" fill="#fff" stroke="#222" stroke-width="1.3"/><circle cx="65.1" cy="915" r="2.2" fill="#fff" stroke="#222" stroke-width="1.3"/><circle cx="49" cy="928.5" r="8.2" fill="#dfe6ee" stroke="#2a3a52" stroke-width="1.5"/><path d="M44,924 Q49,921 54,925 L52,930 L47,935 L45,929Z" fill="#2a3a52"/>
<g transform="translate(56.2,958.5) rotate(45)"><rect x="-10.6" y="-10.6" width="7.2" height="7.2" fill="#fdc63b"/><rect x="-3.6" y="-10.6" width="7.2" height="7.2" fill="#fba617"/><rect x="3.4" y="-10.6" width="7.2" height="7.2" fill="#1bd1e0"/><rect x="-10.6" y="-3.6" width="7.2" height="7.2" fill="#f5442c"/><rect x="-3.6" y="-3.6" width="7.2" height="7.2" fill="#ffffff"/><rect x="3.4" y="-3.6" width="7.2" height="7.2" fill="#0ea5c6"/><rect x="-10.6" y="3.4" width="7.2" height="7.2" fill="#ea1f64"/><rect x="-3.6" y="3.4" width="7.2" height="7.2" fill="#8033e0"/><rect x="3.4" y="3.4" width="7.2" height="7.2" fill="#4b1d96"/></g>
<path d="M14.4,950 L22,957.75 L14.4,965.5Z" fill="#5a5a5a"/>
<path d="M41.1,1002 V979 H57.9" fill="none" stroke="#c9dbf0" stroke-width="1.8"/><path d="M46.2,1007 V984 H62.9" fill="none" stroke="#8fb2da" stroke-width="1.8"/><path d="M51.2,1005 V989 H67.8" fill="none" stroke="#4d6f99" stroke-width="2"/><path d="M54,1008.5 H70.7 V992" fill="none" stroke="#4d6f99" stroke-width="2"/><circle cx="61.2" cy="998.5" r="6.6" fill="#dbe6f3" stroke="#7a9cc6" stroke-width="1.6"/><path d="M57.5,997 L60,1001 L63,995 Q65,994 65,997" fill="none" stroke="#7a9cc6" stroke-width="1.3"/>
<ellipse cx="56.2" cy="1030" rx="15.6" ry="13.6" fill="#a9c3e2" stroke="#4e76a8" stroke-width="1.6"/><path d="M45,1023 Q49,1020 52,1024 L51,1028 L54,1031 L52,1038 L49,1034 L47,1029Z M57,1021 L66,1023 L64,1028 L60,1030 L61,1037 L57,1035 L56,1027Z" fill="#2b4366"/><ellipse cx="56.2" cy="1030" rx="6.5" ry="13.4" fill="none" stroke="#e8f0f8" stroke-width="1"/><path d="M41,1030 H71 M43,1023.5 H69 M43,1036.5 H69" stroke="#e8f0f8" stroke-width="1"/>
<path d="M56.2,1050.5 L67.8,1056 L56.2,1061.7 L44.3,1056Z" fill="#a9c2e0" stroke="#3f628f" stroke-width="1.8" stroke-linejoin="round"/><path d="M44.3,1061 L55,1066.5 V1079.5 L44.3,1074Z" fill="#c5d6ea" stroke="#3f628f" stroke-width="1.8" stroke-linejoin="round"/><path d="M68,1061 L57.4,1066.5 V1079.5 L68,1074Z" fill="#9fb9dc" stroke="#3f628f" stroke-width="1.8" stroke-linejoin="round"/>
<circle cx="56.2" cy="1102" r="5" fill="#7aa6d8" stroke="#3b5b85" stroke-width="2.6"/><path d="M48.5,1094.5 Q44,1102 48.5,1109.5 M63.9,1094.5 Q68.4,1102 63.9,1109.5" fill="none" stroke="#3b5b85" stroke-width="2"/><path d="M45,1092 Q38.5,1102 45,1112 M67.4,1092 Q73.9,1102 67.4,1112" fill="none" stroke="#3b5b85" stroke-width="2"/>
<defs><linearGradient id="vg" x1="0" y1="0" x2="0" y2="1"><stop offset="0" stop-color="#ededed"/><stop offset="1" stop-color="#a9c6e8"/></linearGradient></defs>
<rect x="43.5" y="1125.5" width="25" height="25.5" fill="url(#vg)" stroke="#24364f" stroke-width="2.2"/><path d="M51.8,1125.5 V1151 M60.1,1125.5 V1151 M43.5,1134 H68.5 M43.5,1142.5 H68.5" stroke="#24364f" stroke-width="2"/>
<rect x="42.3" y="1160.3" width="7.6" height="7.6" fill="#6a97cb"/><rect x="52.4" y="1160.3" width="7.6" height="7.6" fill="#6a97cb"/><rect x="62.5" y="1160.3" width="7.6" height="7.6" fill="#6a97cb"/><rect x="42.3" y="1170.4" width="7.6" height="7.6" fill="#6a97cb"/><rect x="52.4" y="1170.4" width="7.6" height="7.6" fill="#6a97cb"/><rect x="62.5" y="1170.4" width="7.6" height="7.6" fill="#6a97cb"/><rect x="42.3" y="1180.5" width="7.6" height="7.6" fill="#6a97cb"/><rect x="52.4" y="1180.5" width="7.6" height="7.6" fill="#6a97cb"/><rect x="62.5" y="1180.5" width="7.6" height="7.6" fill="#6a97cb"/>
<path d="M10,1170 L25.5,1170 L17.75,1178Z" fill="#5a5a5a"/>
<rect x="74.0" y="1196.1" width="7.6" height="7.6" fill="#6a97cb"/><rect x="84.1" y="1196.1" width="7.6" height="7.6" fill="#6a97cb"/><rect x="94.2" y="1196.1" width="7.6" height="7.6" fill="#6a97cb"/><rect x="74.0" y="1206.2" width="7.6" height="7.6" fill="#6a97cb"/><rect x="84.1" y="1206.2" width="7.6" height="7.6" fill="#6a97cb"/><rect x="94.2" y="1206.2" width="7.6" height="7.6" fill="#6a97cb"/><rect x="74.0" y="1216.3" width="7.6" height="7.6" fill="#6a97cb"/><rect x="84.1" y="1216.3" width="7.6" height="7.6" fill="#6a97cb"/><rect x="94.2" y="1216.3" width="7.6" height="7.6" fill="#6a97cb"/>
<rect x="74.0" y="1232.0" width="7.6" height="7.6" fill="#6a97cb"/><rect x="84.1" y="1232.0" width="7.6" height="7.6" fill="#6a97cb"/><rect x="94.2" y="1232.0" width="7.6" height="7.6" fill="#6a97cb"/><rect x="74.0" y="1242.1" width="7.6" height="7.6" fill="#6a97cb"/><rect x="84.1" y="1242.1" width="7.6" height="7.6" fill="#6a97cb"/><rect x="94.2" y="1242.1" width="7.6" height="7.6" fill="#6a97cb"/><rect x="74.0" y="1252.2" width="7.6" height="7.6" fill="#6a97cb"/><rect x="84.1" y="1252.2" width="7.6" height="7.6" fill="#6a97cb"/><rect x="94.2" y="1252.2" width="7.6" height="7.6" fill="#6a97cb"/>
<clipPath id="wcsc"><ellipse cx="56.2" cy="1282" rx="15.4" ry="13.4"/></clipPath><g clip-path="url(#wcsc)"><rect x="40" y="1268" width="33" height="28" fill="#6e9acb"/><rect x="40" y="1272" width="33" height="5" fill="#2e5587"/><rect x="40" y="1283.5" width="33" height="4" fill="#2e5587"/><path d="M40,1277 H73 M40,1283 H73 M40,1289 H73" stroke="#fff" stroke-width="1.2"/><ellipse cx="56.2" cy="1282" rx="6" ry="13.4" fill="none" stroke="#fff" stroke-width="1.2"/></g><ellipse cx="56.2" cy="1282" rx="15.4" ry="13.4" fill="none" stroke="#1f3552" stroke-width="1.8"/>
<ellipse cx="56.2" cy="1318" rx="15.4" ry="13.6" fill="#fff" stroke="#4f86c6" stroke-width="1.8"/><ellipse cx="56.2" cy="1318" rx="6.5" ry="13.6" fill="none" stroke="#4f86c6" stroke-width="1.2"/><path d="M41.2,1318 H71.2" stroke="#a9c5e6" stroke-width="2.2"/><path d="M43.2,1311.5 H69.2 M43.2,1324.5 H69.2" stroke="#4f86c6" stroke-width="1.1"/>
<path d="M46.4,1310.6 L52.3,1326 L59.2,1310.6 L65.2,1310.6" fill="none" stroke="#222" stroke-width="1.4"/><circle cx="46.4" cy="1310.6" r="2.2" fill="#fff" stroke="#222" stroke-width="1.3"/><circle cx="59.2" cy="1310.6" r="2.2" fill="#fff" stroke="#222" stroke-width="1.3"/><circle cx="65.2" cy="1310.6" r="2.2" fill="#fff" stroke="#222" stroke-width="1.3"/><circle cx="52.3" cy="1326" r="2.2" fill="#fff" stroke="#222" stroke-width="1.3"/>
<defs><linearGradient id="sg" x1="0" x2="1"><stop offset="0" stop-color="#ffffff"/><stop offset="1" stop-color="#ededed"/></linearGradient></defs>
<rect x="758.5" y="903" width="28" height="440.5" fill="url(#sg)"/>
<path d="M758.5,903 V1343.5" stroke="#c8c8c8" stroke-width="1"/>
<rect x="759.5" y="930" width="26" height="191.5" fill="#e2e2e2" stroke="#d0d0d0" stroke-width="1"/>
<path d="M759,930 H786 M759,1316 H786" stroke="#cfcfcf" stroke-width="1.5"/>
<path d="M764,920 L779.8,920 L771.9,912Z" fill="#555"/>
<path d="M764,1326 L780,1326 L772,1334Z" fill="#555"/>
</svg></body></html>
